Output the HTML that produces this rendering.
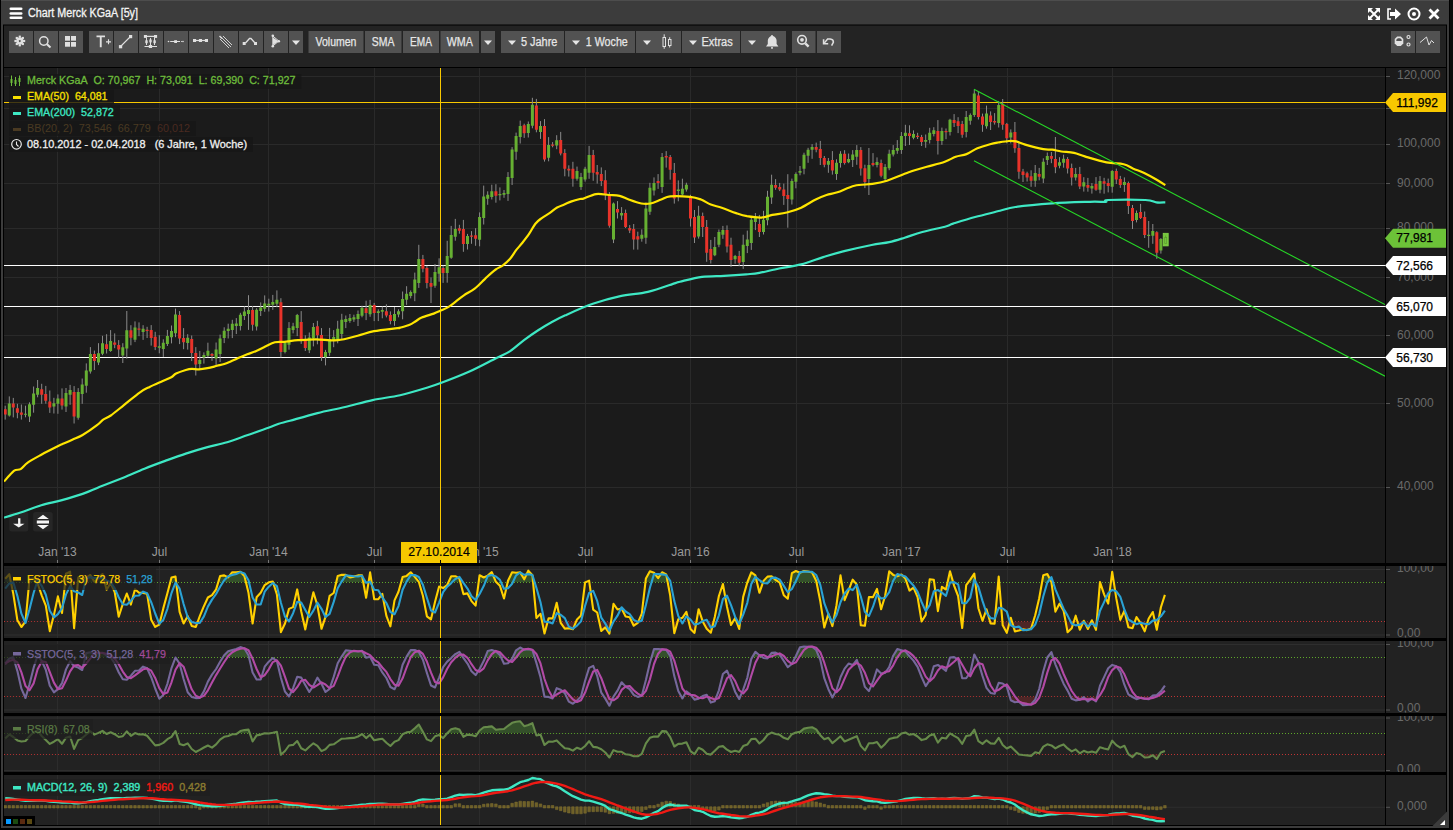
<!DOCTYPE html>
<html><head><meta charset="utf-8"><title>Chart Merck KGaA</title>
<style>
html,body{margin:0;padding:0;background:#0c0c0c;}
body{width:1453px;height:830px;overflow:hidden;position:relative;}
svg{position:absolute;left:0;top:0;display:block;}
text{font-family:"Liberation Sans",sans-serif;}
</style></head><body>
<svg width="1453" height="830" viewBox="0 0 1453 830">
<rect x="0" y="0" width="1453" height="830" fill="#0c0c0c"/>
<rect x="0" y="0" width="1450" height="830" fill="#000"/>
<rect x="1" y="0" width="1448" height="828" fill="#3c3c3c"/>
<rect x="1" y="0" width="1448" height="1" fill="#4d4d4d"/>
<rect x="3" y="24.5" width="1444" height="801.5" fill="#000"/>
<rect x="4" y="25.5" width="1442" height="41.5" fill="#232323"/>
<rect x="4" y="68" width="1442" height="495" fill="#1b1b1b"/>
<line x1="4" y1="76.5" x2="1385" y2="76.5" stroke="#2a2a2a" stroke-width="1"/>
<line x1="4" y1="108.5" x2="1385" y2="108.5" stroke="#2a2a2a" stroke-width="1"/>
<line x1="4" y1="144.5" x2="1385" y2="144.5" stroke="#2a2a2a" stroke-width="1"/>
<line x1="4" y1="183.5" x2="1385" y2="183.5" stroke="#2a2a2a" stroke-width="1"/>
<line x1="4" y1="228.5" x2="1385" y2="228.5" stroke="#2a2a2a" stroke-width="1"/>
<line x1="4" y1="277.5" x2="1385" y2="277.5" stroke="#2a2a2a" stroke-width="1"/>
<line x1="4" y1="335.5" x2="1385" y2="335.5" stroke="#2a2a2a" stroke-width="1"/>
<line x1="4" y1="403.5" x2="1385" y2="403.5" stroke="#2a2a2a" stroke-width="1"/>
<line x1="4" y1="487.5" x2="1385" y2="487.5" stroke="#2a2a2a" stroke-width="1"/>
<line x1="57.5" y1="68" x2="57.5" y2="563" stroke="#2a2a2a" stroke-width="1"/>
<line x1="159.5" y1="68" x2="159.5" y2="563" stroke="#2a2a2a" stroke-width="1"/>
<line x1="268.5" y1="68" x2="268.5" y2="563" stroke="#2a2a2a" stroke-width="1"/>
<line x1="374.5" y1="68" x2="374.5" y2="563" stroke="#2a2a2a" stroke-width="1"/>
<line x1="479.5" y1="68" x2="479.5" y2="563" stroke="#2a2a2a" stroke-width="1"/>
<line x1="585.5" y1="68" x2="585.5" y2="563" stroke="#2a2a2a" stroke-width="1"/>
<line x1="690.5" y1="68" x2="690.5" y2="563" stroke="#2a2a2a" stroke-width="1"/>
<line x1="796.5" y1="68" x2="796.5" y2="563" stroke="#2a2a2a" stroke-width="1"/>
<line x1="901.5" y1="68" x2="901.5" y2="563" stroke="#2a2a2a" stroke-width="1"/>
<line x1="1007.5" y1="68" x2="1007.5" y2="563" stroke="#2a2a2a" stroke-width="1"/>
<line x1="1112.5" y1="68" x2="1112.5" y2="563" stroke="#2a2a2a" stroke-width="1"/>
<rect x="1385" y="68" width="1" height="495" fill="#000"/>
<rect x="1386" y="76.0" width="4" height="1" fill="#555"/>
<text x="1397" y="79.1" font-size="12" fill="#6a6a6a">120,000</text>
<rect x="1386" y="108.0" width="4" height="1" fill="#555"/>
<rect x="1386" y="144.0" width="4" height="1" fill="#555"/>
<text x="1397" y="147.4" font-size="12" fill="#6a6a6a">100,000</text>
<rect x="1386" y="183.0" width="4" height="1" fill="#555"/>
<text x="1397" y="186.8" font-size="12" fill="#6a6a6a">90,000</text>
<rect x="1386" y="228.0" width="4" height="1" fill="#555"/>
<text x="1397" y="230.8" font-size="12" fill="#6a6a6a">80,000</text>
<rect x="1386" y="277.0" width="4" height="1" fill="#555"/>
<text x="1397" y="280.8" font-size="12" fill="#6a6a6a">70,000</text>
<rect x="1386" y="335.0" width="4" height="1" fill="#555"/>
<text x="1397" y="338.5" font-size="12" fill="#6a6a6a">60,000</text>
<rect x="1386" y="403.0" width="4" height="1" fill="#555"/>
<text x="1397" y="406.7" font-size="12" fill="#6a6a6a">50,000</text>
<rect x="1386" y="487.0" width="4" height="1" fill="#555"/>
<text x="1397" y="490.2" font-size="12" fill="#6a6a6a">40,000</text>
<text x="57.5" y="556" font-size="12" fill="#9a9a9a" text-anchor="middle">Jan '13</text>
<rect x="57.0" y="560" width="1" height="3" fill="#777"/>
<text x="159.5" y="556" font-size="12" fill="#9a9a9a" text-anchor="middle">Jul</text>
<rect x="159.0" y="560" width="1" height="3" fill="#777"/>
<text x="268.5" y="556" font-size="12" fill="#9a9a9a" text-anchor="middle">Jan '14</text>
<rect x="268.0" y="560" width="1" height="3" fill="#777"/>
<text x="374.5" y="556" font-size="12" fill="#9a9a9a" text-anchor="middle">Jul</text>
<rect x="374.0" y="560" width="1" height="3" fill="#777"/>
<text x="479.5" y="556" font-size="12" fill="#9a9a9a" text-anchor="middle">Jan '15</text>
<rect x="479.0" y="560" width="1" height="3" fill="#777"/>
<text x="585.5" y="556" font-size="12" fill="#9a9a9a" text-anchor="middle">Jul</text>
<rect x="585.0" y="560" width="1" height="3" fill="#777"/>
<text x="690.5" y="556" font-size="12" fill="#9a9a9a" text-anchor="middle">Jan '16</text>
<rect x="690.0" y="560" width="1" height="3" fill="#777"/>
<text x="796.5" y="556" font-size="12" fill="#9a9a9a" text-anchor="middle">Jul</text>
<rect x="796.0" y="560" width="1" height="3" fill="#777"/>
<text x="901.5" y="556" font-size="12" fill="#9a9a9a" text-anchor="middle">Jan '17</text>
<rect x="901.0" y="560" width="1" height="3" fill="#777"/>
<text x="1007.5" y="556" font-size="12" fill="#9a9a9a" text-anchor="middle">Jul</text>
<rect x="1007.0" y="560" width="1" height="3" fill="#777"/>
<text x="1112.5" y="556" font-size="12" fill="#9a9a9a" text-anchor="middle">Jan '18</text>
<rect x="1112.0" y="560" width="1" height="3" fill="#777"/>
<defs><clipPath id="plot"><rect x="4" y="68" width="1381" height="495"/></clipPath></defs>
<g clip-path="url(#plot)">
<line x1="4" y1="265.5" x2="1385" y2="265.5" stroke="#ffffff" stroke-width="1"/>
<line x1="4" y1="306.5" x2="1385" y2="306.5" stroke="#ffffff" stroke-width="1"/>
<line x1="4" y1="357.5" x2="1385" y2="357.5" stroke="#ffffff" stroke-width="1"/>
<line x1="4" y1="102.5" x2="1385" y2="102.5" stroke="#f8c800" stroke-width="1"/>
<line x1="440.5" y1="68" x2="440.5" y2="563" stroke="#f8c800" stroke-width="1"/>
<path d="M5.2 405.7V419.6M9.3 396.4V416.6M13.3 397.9V417.4M17.4 403.8V418.3M21.4 404.5V419.6M25.5 405.7V417.3M29.5 402.3V422.0M33.6 386.5V412.7M37.6 380.0V397.3M41.7 383.8V403.8M45.8 385.9V403.7M49.8 390.5V412.9M53.9 397.8V413.5M57.9 394.4V413.8M62.0 388.4V409.6M66.0 388.0V412.0M70.1 384.9V404.8M74.1 386.1V423.5M78.2 388.1V419.7M82.2 378.5V403.8M86.3 363.4V392.7M90.4 347.1V373.6M94.4 350.6V370.0M98.5 343.2V365.1M102.5 335.8V355.2M106.6 334.2V353.5M110.6 330.1V351.8M114.7 333.4V348.2M118.7 340.1V357.6M122.8 343.2V363.0M126.8 311.0V358.7M130.9 325.2V345.3M135.0 321.4V342.1M139.0 322.4V336.2M143.1 325.2V339.9M147.1 326.8V338.0M151.2 325.1V345.6M155.2 331.8V350.1M159.3 335.2V353.3M163.3 339.3V356.9M167.4 329.9V346.0M171.5 325.5V343.4M175.5 308.6V337.2M179.6 311.1V344.1M183.6 328.1V349.2M187.7 334.2V349.6M191.7 335.5V361.1M195.8 347.1V375.5M199.8 350.9V369.4M203.9 352.4V363.6M207.9 342.7V357.3M212.0 353.0V360.8M216.1 342.5V366.8M220.1 334.6V362.0M224.2 327.3V343.1M228.2 323.7V338.5M232.3 319.8V338.1M236.3 318.1V334.0M240.4 312.8V330.5M244.4 306.5V320.0M248.5 295.2V329.9M252.6 305.9V330.7M256.6 308.2V330.5M260.7 302.4V316.0M264.7 295.4V311.8M268.8 298.7V311.5M272.8 294.9V309.8M276.9 290.4V307.2M280.9 298.2V357.4M285.0 340.9V353.4M289.0 322.1V349.7M293.1 322.8V333.4M297.2 313.9V336.1M301.2 311.1V343.9M305.3 335.3V351.0M309.3 332.5V353.1M313.4 323.0V346.4M317.4 320.8V344.3M321.5 328.1V360.9M325.5 349.9V365.4M329.6 327.9V355.8M333.7 330.1V347.2M337.7 320.8V343.3M341.8 313.8V338.9M345.8 315.5V328.1M349.9 314.0V322.8M353.9 314.7V321.9M358.0 310.5V326.0M362.0 305.7V317.3M366.1 300.7V320.1M370.1 299.9V316.8M374.2 302.9V321.1M378.3 309.3V321.1M382.3 306.5V318.3M386.4 304.3V317.4M390.4 311.4V324.3M394.5 307.0V325.8M398.5 309.3V317.3M402.6 291.5V319.3M406.6 286.2V304.9M410.7 290.4V298.4M414.8 272.6V301.2M418.8 244.8V287.9M422.9 254.9V272.3M426.9 265.9V288.4M431.0 277.4V303.0M435.0 264.0V287.8M439.1 258.3V281.7M443.1 265.6V282.9M447.2 240.8V282.7M451.2 225.9V258.8M455.3 218.9V240.7M459.4 224.8V233.7M463.4 219.9V251.8M467.5 233.9V249.5M471.5 231.1V243.8M475.6 228.2V245.8M479.6 212.4V246.3M483.7 185.6V224.5M487.7 191.3V204.8M491.8 184.7V199.5M495.9 184.2V202.7M499.9 187.4V200.4M504.0 190.0V197.8M508.0 172.1V200.9M512.1 147.1V185.0M516.1 132.6V159.8M520.2 120.6V143.5M524.2 123.7V137.9M528.3 121.5V137.5M532.4 97.8V128.3M536.4 98.9V132.3M540.5 121.1V138.9M544.5 119.1V161.6M548.6 137.1V161.3M552.6 142.1V147.3M556.7 135.2V149.2M560.7 131.9V155.4M564.8 149.1V176.3M568.8 165.3V176.6M572.9 161.8V186.7M577.0 166.6V180.7M581.0 172.9V189.9M585.1 166.8V181.6M589.1 145.9V178.8M593.2 149.9V180.8M597.2 165.0V183.6M601.3 167.4V186.1M605.3 170.2V200.1M609.4 192.1V227.7M613.5 202.5V243.1M617.5 201.1V218.5M621.6 207.1V219.9M625.6 209.6V228.0M629.7 225.1V233.1M633.7 224.0V249.6M637.8 231.7V249.6M641.8 229.3V241.7M645.9 202.6V243.8M649.9 182.8V214.8M654.0 177.4V195.5M658.1 174.1V188.9M662.1 153.0V192.9M666.2 151.1V167.6M670.2 155.0V179.7M674.3 163.0V203.6M678.3 180.4V201.3M682.4 178.7V195.5M686.4 182.7V191.6M690.5 194.8V226.5M694.5 210.0V243.0M698.6 205.8V238.6M702.7 212.6V237.0M706.7 220.0V261.8M710.8 239.9V263.5M714.8 237.0V256.2M718.9 229.5V247.2M722.9 225.9V238.8M727.0 225.4V252.5M731.0 237.7V267.0M735.1 254.9V263.7M739.2 250.9V266.3M743.2 234.7V268.9M747.3 230.6V253.1M751.3 216.3V249.9M755.4 213.0V230.1M759.4 214.9V237.0M763.5 210.8V234.5M767.5 190.8V225.3M771.6 174.7V203.9M775.6 179.1V189.8M779.7 182.9V191.1M783.8 183.6V204.9M787.8 174.2V227.7M791.9 178.6V204.5M795.9 172.4V188.3M800.0 166.0V175.3M804.0 152.7V174.3M808.1 147.8V162.8M812.1 144.1V158.8M816.2 142.6V152.3M820.3 140.9V165.0M824.3 156.0V167.3M828.4 158.0V172.8M832.4 151.1V174.6M836.5 159.3V179.9M840.5 151.2V167.6M844.6 150.2V164.6M848.6 153.5V163.2M852.7 150.1V167.0M856.8 145.1V164.8M860.8 147.1V175.6M864.9 164.7V188.1M868.9 148.0V195.0M873.0 153.1V166.4M877.0 157.4V167.4M881.1 159.6V177.3M885.1 164.1V182.0M889.2 149.7V170.2M893.2 145.1V156.5M897.3 140.1V153.8M901.4 132.0V153.9M905.4 124.8V146.0M909.5 125.3V145.0M913.5 130.4V139.3M917.6 132.8V139.0M921.6 134.9V146.0M925.7 134.5V147.8M929.7 127.8V143.5M933.8 127.2V136.4M937.9 120.1V154.5M941.9 127.6V144.9M946.0 128.5V139.2M950.0 118.8V135.5M954.1 114.1V127.0M958.1 117.2V133.1M962.2 120.9V137.8M966.2 111.0V137.4M970.3 113.4V124.7M974.3 89.6V116.9M978.4 91.4V119.5M982.5 113.6V131.8M986.5 105.6V128.7M990.6 111.4V130.0M994.6 113.1V124.6M998.7 100.9V127.5M1002.7 99.0V129.8M1006.8 122.9V143.3M1010.8 129.4V143.4M1014.9 122.0V152.8M1018.9 141.9V178.8M1023.0 168.9V182.0M1027.1 171.7V181.5M1031.1 170.3V186.8M1035.2 165.0V186.8M1039.2 167.9V180.3M1043.3 158.3V183.1M1047.3 152.5V165.0M1051.4 152.0V163.2M1055.4 137.0V173.2M1059.5 157.2V168.3M1063.6 154.7V167.7M1067.6 157.1V173.5M1071.7 163.6V185.5M1075.7 167.9V180.5M1079.8 166.9V189.1M1083.8 177.2V191.6M1087.9 177.9V191.7M1091.9 183.1V193.6M1096.0 177.1V190.8M1100.0 176.1V193.3M1104.1 177.8V193.7M1108.2 178.6V192.4M1112.2 170.1V192.7M1116.3 168.6V184.0M1120.3 175.9V187.9M1124.4 177.4V191.9M1128.4 181.6V214.0M1132.5 205.0V229.0M1136.5 210.5V222.4M1140.6 203.9V219.0M1144.7 211.5V238.0M1148.7 221.0V247.8M1152.8 224.0V243.8M1156.8 231.2V258.8M1160.9 238.0V253.6" stroke="#8a8a8a" stroke-width="1" fill="none"/>
<path d="M7.8 403.4h3v12.1h-3zM24.0 413.7h3v1.1h-3zM28.0 404.3h3v12.1h-3zM32.1 393.5h3v11.2h-3zM36.1 388.1h3v6.7h-3zM52.4 403.3h3v3.3h-3zM56.4 398.4h3v5.4h-3zM64.5 393.0h3v13.6h-3zM68.6 389.9h3v4.9h-3zM76.7 392.1h3v25.7h-3zM80.7 384.5h3v9.4h-3zM84.8 370.4h3v15.4h-3zM88.9 354.1h3v17.5h-3zM97.0 353.2h3v9.4h-3zM101.0 343.3h3v10.5h-3zM109.1 341.1h3v9.8h-3zM121.3 347.2h3v8.3h-3zM125.3 330.2h3v18.4h-3zM133.5 327.4h3v12.3h-3zM141.6 328.7h3v3.3h-3zM157.8 346.2h3v1.6h-3zM161.8 342.8h3v6.1h-3zM165.9 335.9h3v8.1h-3zM170.0 331.0h3v6.3h-3zM174.0 314.6h3v18.6h-3zM186.2 337.7h3v5.4h-3zM198.3 359.9h3v4.0h-3zM202.4 354.9h3v2.7h-3zM206.4 350.7h3v5.1h-3zM214.6 349.5h3v9.0h-3zM218.6 338.6h3v15.4h-3zM222.7 330.8h3v7.2h-3zM226.7 328.7h3v2.3h-3zM230.8 323.8h3v6.3h-3zM234.8 323.6h3v2.3h-3zM238.9 314.8h3v11.2h-3zM242.9 311.5h3v4.5h-3zM247.0 309.9h3v4.0h-3zM255.1 309.7h3v16.8h-3zM259.2 307.4h3v3.6h-3zM263.2 303.4h3v5.4h-3zM267.3 303.7h3v1.8h-3zM271.3 301.9h3v2.9h-3zM275.4 299.8h3v4.0h-3zM283.5 342.9h3v9.0h-3zM287.5 328.1h3v16.6h-3zM291.6 326.3h3v3.6h-3zM295.7 314.9h3v13.2h-3zM307.8 337.5h3v12.7h-3zM311.9 327.0h3v11.4h-3zM324.0 351.9h3v5.4h-3zM328.1 338.9h3v13.9h-3zM332.2 337.1h3v3.1h-3zM336.2 328.8h3v10.5h-3zM340.3 319.8h3v14.1h-3zM344.3 319.0h3v3.1h-3zM348.4 318.0h3v2.9h-3zM352.4 317.2h3v2.2h-3zM356.5 314.0h3v5.1h-3zM360.5 307.7h3v8.1h-3zM368.6 304.9h3v9.4h-3zM376.8 311.3h3v1.8h-3zM380.8 310.0h3v1.8h-3zM393.0 314.0h3v6.9h-3zM397.0 311.3h3v3.1h-3zM401.1 299.0h3v12.3h-3zM405.1 293.7h3v6.1h-3zM409.2 291.9h3v4.0h-3zM413.3 279.6h3v13.6h-3zM417.3 258.9h3v24.0h-3zM433.5 272.0h3v13.7h-3zM437.6 267.2h3v6.5h-3zM445.7 256.0h3v16.9h-3zM449.7 234.9h3v22.9h-3zM453.8 228.9h3v7.8h-3zM466.0 235.9h3v8.1h-3zM478.1 216.9h3v22.9h-3zM482.2 196.6h3v21.3h-3zM486.2 194.8h3v4.0h-3zM490.3 191.2h3v5.8h-3zM498.4 193.9h3v1.4h-3zM502.5 193.0h3v1.8h-3zM506.5 177.1h3v16.8h-3zM510.6 149.6h3v28.4h-3zM514.6 136.1h3v15.7h-3zM518.7 126.1h3v10.8h-3zM526.8 124.0h3v9.0h-3zM530.9 104.8h3v21.0h-3zM539.0 126.1h3v5.8h-3zM547.1 145.1h3v12.7h-3zM555.2 140.2h3v5.4h-3zM575.5 171.1h3v7.6h-3zM579.5 176.9h3v10.0h-3zM583.6 168.8h3v10.8h-3zM587.6 154.9h3v17.9h-3zM612.0 203.5h3v36.1h-3zM620.1 213.1h3v2.3h-3zM640.3 234.8h3v3.9h-3zM644.4 208.6h3v29.2h-3zM648.4 187.8h3v24.0h-3zM652.5 182.9h3v7.6h-3zM660.6 157.0h3v29.9h-3zM676.8 189.5h3v1.5h-3zM680.9 188.7h3v5.8h-3zM684.9 184.7h3v4.9h-3zM697.1 215.8h3v20.8h-3zM713.3 247.0h3v8.2h-3zM717.4 232.0h3v12.7h-3zM721.4 229.9h3v4.9h-3zM733.6 255.9h3v3.3h-3zM741.7 244.7h3v17.2h-3zM745.8 239.6h3v6.5h-3zM749.8 219.8h3v23.1h-3zM753.9 218.0h3v4.1h-3zM762.0 219.8h3v12.2h-3zM766.0 196.8h3v23.5h-3zM770.1 184.7h3v12.7h-3zM790.4 181.1h3v18.4h-3zM794.4 173.9h3v7.9h-3zM798.5 171.0h3v1.8h-3zM802.5 154.7h3v14.1h-3zM806.6 149.8h3v6.0h-3zM810.6 147.1h3v2.7h-3zM826.9 161.0h3v3.8h-3zM835.0 162.8h3v11.1h-3zM839.0 153.7h3v9.4h-3zM847.1 159.0h3v3.2h-3zM851.2 154.6h3v5.4h-3zM855.2 150.1h3v6.7h-3zM867.4 164.9h3v14.1h-3zM875.5 161.9h3v3.0h-3zM883.6 167.1h3v11.9h-3zM887.7 153.7h3v14.5h-3zM891.7 150.1h3v4.4h-3zM895.8 148.1h3v2.7h-3zM899.9 136.0h3v13.9h-3zM903.9 132.8h3v3.2h-3zM912.0 133.9h3v3.9h-3zM924.2 140.0h3v1.8h-3zM928.2 132.8h3v7.2h-3zM932.3 130.2h3v3.7h-3zM940.4 131.1h3v9.8h-3zM948.5 119.8h3v12.2h-3zM964.7 117.0h3v14.9h-3zM968.8 114.9h3v5.8h-3zM972.8 93.6h3v21.3h-3zM985.0 113.6h3v12.6h-3zM997.2 104.9h3v18.1h-3zM1009.3 132.4h3v5.0h-3zM1033.7 173.0h3v7.8h-3zM1041.8 161.8h3v16.8h-3zM1045.8 156.0h3v4.0h-3zM1058.0 162.2h3v3.6h-3zM1062.1 158.7h3v4.0h-3zM1074.2 173.9h3v3.6h-3zM1082.3 182.2h3v4.4h-3zM1090.4 186.1h3v2.5h-3zM1098.5 181.1h3v8.7h-3zM1110.7 171.1h3v15.6h-3zM1122.9 181.9h3v3.0h-3zM1135.0 213.0h3v6.9h-3zM1147.2 234.7h3v1.2h-3zM1151.3 231.0h3v4.8h-3zM1159.4 239.0h3v11.6h-3z" fill="#66b032"/>
<path d="M3.7 409.2h3v5.4h-3zM11.8 403.4h3v4.0h-3zM15.9 408.3h3v4.5h-3zM19.9 412.5h3v2.2h-3zM40.2 389.3h3v5.4h-3zM44.2 393.9h3v6.9h-3zM48.3 401.5h3v6.0h-3zM60.5 398.4h3v7.2h-3zM72.6 392.1h3v24.4h-3zM92.9 354.1h3v6.9h-3zM105.1 344.2h3v4.9h-3zM113.2 342.4h3v2.3h-3zM117.2 345.1h3v4.5h-3zM129.4 330.2h3v7.6h-3zM137.5 328.4h3v1.3h-3zM145.6 329.8h3v1.2h-3zM149.7 330.1h3v8.0h-3zM153.7 336.8h3v10.3h-3zM178.1 315.1h3v23.5h-3zM182.1 338.1h3v4.2h-3zM190.2 339.0h3v14.1h-3zM194.3 353.1h3v11.4h-3zM210.5 354.0h3v1.8h-3zM251.1 309.9h3v14.8h-3zM279.4 302.2h3v49.7h-3zM299.7 322.1h3v16.8h-3zM303.8 339.3h3v8.7h-3zM315.9 326.3h3v9.0h-3zM320.0 335.1h3v22.2h-3zM364.6 308.2h3v4.9h-3zM372.7 304.9h3v8.1h-3zM384.9 311.3h3v4.2h-3zM388.9 314.9h3v6.0h-3zM421.4 258.9h3v9.9h-3zM425.4 267.9h3v15.0h-3zM429.5 282.9h3v3.9h-3zM441.6 268.1h3v4.8h-3zM457.9 228.3h3v2.4h-3zM461.9 228.9h3v15.1h-3zM470.0 235.6h3v1.2h-3zM474.1 235.2h3v3.6h-3zM494.4 191.2h3v4.5h-3zM522.7 125.2h3v8.1h-3zM534.9 105.4h3v24.4h-3zM543.0 126.1h3v33.4h-3zM551.1 144.6h3v1.2h-3zM559.2 139.9h3v13.5h-3zM563.3 153.1h3v15.7h-3zM567.3 168.8h3v1.8h-3zM571.4 168.8h3v9.9h-3zM591.7 154.9h3v17.9h-3zM595.7 172.0h3v2.6h-3zM599.8 173.9h3v7.2h-3zM603.8 180.2h3v13.9h-3zM607.9 194.1h3v31.6h-3zM616.0 209.1h3v3.4h-3zM624.1 213.1h3v13.9h-3zM628.2 228.1h3v2.5h-3zM632.2 229.0h3v10.6h-3zM636.3 236.2h3v3.4h-3zM656.6 181.1h3v1.8h-3zM664.7 156.1h3v1.5h-3zM668.7 157.0h3v12.7h-3zM672.8 173.0h3v25.6h-3zM689.0 196.8h3v21.7h-3zM693.0 217.0h3v20.5h-3zM701.2 216.1h3v10.9h-3zM705.2 227.0h3v25.8h-3zM709.3 248.9h3v11.1h-3zM725.5 229.9h3v16.6h-3zM729.5 244.7h3v15.3h-3zM737.7 255.9h3v6.9h-3zM757.9 223.9h3v8.1h-3zM774.1 185.1h3v2.7h-3zM778.2 186.9h3v2.7h-3zM782.3 189.6h3v6.3h-3zM786.3 195.0h3v4.0h-3zM814.7 147.1h3v2.7h-3zM818.8 148.9h3v9.1h-3zM822.8 158.0h3v6.8h-3zM830.9 160.1h3v10.5h-3zM843.1 153.7h3v9.4h-3zM859.3 150.1h3v18.5h-3zM863.4 168.2h3v13.9h-3zM871.5 163.1h3v1.8h-3zM879.6 163.1h3v12.7h-3zM908.0 133.3h3v2.7h-3zM916.1 135.8h3v1.2h-3zM920.1 136.9h3v5.1h-3zM936.4 131.1h3v9.8h-3zM944.5 131.0h3v1.2h-3zM952.6 120.1h3v2.9h-3zM956.6 121.2h3v4.9h-3zM960.7 123.9h3v10.9h-3zM976.9 95.4h3v21.6h-3zM981.0 116.6h3v8.2h-3zM989.1 115.4h3v6.6h-3zM993.1 121.1h3v1.5h-3zM1001.2 104.0h3v20.8h-3zM1005.3 123.9h3v14.4h-3zM1013.4 132.0h3v16.3h-3zM1017.4 147.9h3v23.9h-3zM1021.5 171.4h3v3.6h-3zM1025.6 173.2h3v4.3h-3zM1029.6 176.3h3v4.5h-3zM1037.7 173.9h3v2.9h-3zM1049.9 156.0h3v2.7h-3zM1053.9 159.1h3v8.1h-3zM1066.1 159.1h3v9.4h-3zM1070.2 168.1h3v9.4h-3zM1078.3 173.9h3v12.7h-3zM1086.4 184.9h3v2.8h-3zM1094.5 184.1h3v5.7h-3zM1102.6 181.3h3v2.4h-3zM1106.7 183.1h3v2.8h-3zM1114.8 171.1h3v8.4h-3zM1118.8 178.9h3v6.0h-3zM1126.9 183.1h3v22.9h-3zM1131.0 208.0h3v13.0h-3zM1139.1 211.9h3v6.1h-3zM1143.2 217.0h3v18.0h-3zM1155.3 232.2h3v20.6h-3z" fill="#e8332a"/>
<rect x="9.3" y="512" width="19" height="19.6" rx="2.5" fill="#262626"/>
<rect x="33.1" y="512" width="19.6" height="19.6" rx="2.5" fill="#262626"/>
<path d="M18.1 518.3h2.3v5.5h4.1l-5.7 3.6l-5.7-3.6h5z" fill="#f4f4f4"/>
<path d="M43 514.7l5.8 4.2h-11.6z M36.8 520.4h12.2v3h-12.2z M43 529.2l5.8-4.3h-11.6z" fill="#f4f4f4"/>
<path d="M4.1,481.5 C5.7,479.7 11.2,473.0 13.9,470.9 C16.6,468.8 18.3,470.5 20.6,469.1 C22.9,467.7 24.2,465.0 27.7,462.6 C31.1,460.2 36.2,457.5 41.3,454.7 C46.4,451.9 54.8,447.7 58.2,446.0 C61.7,444.3 59.6,445.3 62.0,444.3 C64.3,443.3 68.9,441.4 72.3,439.8 C75.7,438.2 78.5,437.4 82.6,435.0 C86.7,432.6 93.6,427.8 97.0,425.2 C100.4,422.6 100.9,421.2 103.2,419.6 C105.5,418.0 107.3,417.9 110.8,415.5 C114.2,413.1 119.0,409.0 123.9,405.1 C128.8,401.2 135.7,395.3 140.0,392.3 C144.3,389.3 146.0,388.7 149.6,386.9 C153.2,385.1 158.1,383.0 161.7,381.4 C165.3,379.8 168.9,378.5 171.3,377.2 C173.7,375.9 173.7,374.8 176.1,373.6 C178.5,372.4 183.2,370.8 185.8,370.0 C188.4,369.2 189.6,368.9 191.8,368.8 C194.0,368.7 196.4,369.5 199.0,369.4 C201.6,369.3 204.5,368.8 207.5,368.2 C210.5,367.6 214.3,366.5 217.1,365.8 C219.9,365.1 221.9,364.8 224.3,364.0 C226.7,363.2 229.0,362.1 231.6,361.0 C234.2,359.9 237.4,358.4 240.0,357.3 C242.6,356.2 244.6,355.3 247.2,354.3 C249.8,353.3 252.7,352.6 255.7,351.3 C258.7,350.0 262.1,348.0 265.3,346.5 C268.5,345.0 271.7,343.1 274.9,342.3 C278.1,341.5 282.1,342.1 284.6,341.9 C287.1,341.7 287.8,341.4 290.0,341.1 C292.2,340.8 293.6,340.5 298.0,340.2 C302.4,339.9 309.5,339.3 316.1,339.3 C322.7,339.3 330.9,340.8 337.8,340.2 C344.7,339.6 351.7,337.2 357.7,335.7 C363.7,334.2 367.4,332.5 374.0,331.2 C380.6,329.9 393.2,328.7 397.5,328.1 C401.8,327.5 398.0,328.4 400.0,327.8 C402.0,327.2 407.0,325.9 409.6,324.8 C412.2,323.7 413.7,322.4 415.7,321.2 C417.7,320.0 418.7,318.9 421.7,317.6 C424.7,316.3 430.7,314.7 433.7,313.6 C436.7,312.5 437.4,312.1 439.8,311.0 C442.2,309.9 445.6,308.6 448.2,307.1 C450.8,305.6 452.8,303.9 455.4,301.9 C458.0,299.9 460.7,297.5 463.9,295.3 C467.1,293.1 471.3,291.3 474.7,288.7 C478.1,286.1 482.2,281.6 484.3,279.6 C486.4,277.6 485.3,278.4 487.2,276.7 C489.1,275.0 493.1,271.4 495.7,269.5 C498.3,267.6 500.5,267.1 502.9,265.3 C505.3,263.5 507.9,261.2 510.1,258.7 C512.3,256.2 514.1,252.8 516.1,250.2 C518.1,247.6 520.0,245.8 522.2,243.0 C524.4,240.2 527.2,236.6 529.4,233.4 C531.6,230.2 533.4,226.2 535.4,223.7 C537.4,221.2 539.0,220.1 541.4,218.3 C543.8,216.5 547.3,214.7 549.9,212.9 C552.5,211.1 554.7,208.9 557.1,207.5 C559.5,206.1 561.9,205.5 564.3,204.5 C566.7,203.5 569.0,202.3 571.6,201.4 C574.2,200.5 578.0,199.5 580.0,199.0 C582.0,198.5 580.8,199.4 583.5,198.6 C586.2,197.8 591.9,194.7 596.1,194.1 C600.3,193.5 604.9,194.7 608.8,195.0 C612.7,195.3 616.3,195.2 619.6,195.9 C622.9,196.7 625.1,198.2 628.7,199.5 C632.3,200.8 637.7,202.8 641.3,203.5 C644.9,204.2 647.1,204.2 650.4,203.5 C653.7,202.8 657.9,200.7 661.2,199.5 C664.5,198.3 665.4,196.8 670.2,196.3 C675.0,195.9 685.0,196.3 690.1,196.8 C695.2,197.3 697.5,198.2 701.0,199.5 C704.5,200.8 707.3,203.2 710.8,204.6 C714.2,206.0 717.5,206.3 721.7,207.7 C725.9,209.1 731.9,211.7 736.1,213.1 C740.3,214.5 742.8,215.4 747.0,216.2 C751.2,216.9 757.2,217.8 761.4,217.6 C765.6,217.4 768.1,215.8 772.3,214.9 C776.5,214.1 782.0,213.7 786.8,212.5 C791.6,211.3 796.4,209.9 801.2,207.7 C806.0,205.5 811.5,201.6 815.7,199.5 C819.9,197.4 822.9,196.2 826.5,195.0 C830.1,193.8 832.7,193.9 837.4,192.3 C842.1,190.8 848.6,187.1 854.5,185.7 C860.4,184.3 867.1,184.7 872.5,183.9 C877.9,183.1 881.0,182.6 887.0,180.7 C893.0,178.8 902.1,174.5 908.7,172.2 C915.3,169.9 920.8,168.6 926.8,166.8 C932.8,165.1 940.0,163.4 944.8,161.7 C949.6,160.0 952.1,158.1 955.7,156.8 C959.3,155.5 962.9,155.5 966.5,154.1 C970.1,152.7 973.5,150.0 977.4,148.3 C981.3,146.7 986.5,145.2 990.0,144.2 C993.5,143.2 995.0,143.0 998.1,142.5 C1001.2,142.0 1005.9,141.2 1008.9,141.0 C1011.9,140.8 1013.4,140.8 1016.1,141.4 C1018.8,142.0 1020.7,143.3 1025.2,144.6 C1029.7,145.9 1038.8,148.3 1043.3,149.2 C1047.8,150.0 1049.3,149.3 1052.3,149.7 C1055.3,150.1 1057.7,151.0 1061.3,151.5 C1064.9,152.0 1070.1,152.0 1074.0,152.8 C1077.9,153.6 1079.4,154.8 1084.8,156.4 C1090.2,158.0 1100.0,161.1 1106.5,162.4 C1113.0,163.7 1119.2,163.1 1123.7,164.2 C1128.2,165.2 1130.0,167.2 1133.4,168.7 C1136.8,170.1 1140.4,171.1 1144.2,172.9 C1148.0,174.7 1152.8,177.4 1156.3,179.5 C1159.8,181.6 1163.8,184.2 1165.3,185.2" fill="none" stroke="#ffe600" stroke-width="2.2" stroke-linejoin="round"/>
<path d="M4.1,517.6 C6.8,516.8 14.4,514.6 20.6,512.5 C26.8,510.4 34.4,507.3 41.3,505.2 C48.2,503.1 55.1,502.0 62.0,500.1 C68.9,498.2 75.7,496.3 82.6,493.9 C89.5,491.5 96.3,488.4 103.2,485.6 C110.1,482.9 117.0,480.2 123.9,477.4 C130.8,474.6 137.6,471.4 144.5,468.7 C151.4,465.9 158.3,463.4 165.2,460.9 C172.1,458.4 178.9,455.9 185.8,453.6 C192.7,451.4 199.6,449.3 206.5,447.4 C213.4,445.5 220.2,444.4 227.1,442.3 C234.0,440.2 240.9,437.4 247.8,435.0 C254.7,432.6 263.2,429.7 268.4,427.8 C273.6,425.9 275.2,424.9 278.8,423.7 C282.4,422.5 283.6,422.6 290.0,420.8 C296.4,419.0 308.3,415.4 317.5,413.1 C326.7,410.8 335.9,409.2 345.1,407.0 C354.3,404.8 363.4,402.1 372.6,400.1 C381.8,398.1 390.9,397.3 400.1,395.2 C409.3,393.1 420.7,389.6 427.6,387.5 C434.5,385.4 434.5,385.4 441.4,382.8 C448.3,380.2 459.7,375.9 468.9,371.8 C478.1,367.7 489.6,361.4 496.5,358.0 C503.4,354.6 505.6,354.1 510.2,351.1 C514.8,348.1 519.4,343.5 524.0,340.1 C528.6,336.7 533.2,333.5 537.8,330.5 C542.4,327.5 546.9,324.7 551.5,322.2 C556.1,319.7 558.4,318.4 565.3,315.3 C572.2,312.2 583.6,307.0 592.8,303.8 C602.0,300.6 611.1,298.1 620.3,296.1 C629.5,294.1 638.7,294.1 647.9,291.9 C657.1,289.7 670.0,284.8 675.4,283.1 C680.8,281.4 675.6,282.7 680.0,281.7 C684.4,280.7 694.7,277.9 702.0,276.9 C709.3,275.9 716.6,276.2 724.0,275.8 C731.4,275.4 740.2,274.8 746.1,274.3 C752.0,273.8 753.8,273.9 759.3,272.9 C764.8,271.9 772.1,269.9 779.1,268.5 C786.1,267.1 793.8,266.3 801.1,264.4 C808.5,262.5 815.9,259.4 823.2,257.1 C830.6,254.9 837.1,252.9 845.2,250.9 C853.3,248.9 864.3,246.5 871.6,245.0 C878.9,243.5 883.7,243.3 889.2,242.1 C894.7,240.9 899.1,239.4 904.6,237.7 C910.1,236.0 915.3,233.9 922.3,232.0 C929.3,230.1 941.4,227.6 946.5,226.2 C951.6,224.8 948.3,225.1 953.1,223.6 C957.9,222.1 967.3,219.1 975.1,217.0 C982.9,214.9 993.3,212.5 1000.0,210.8 C1006.7,209.1 1006.7,208.2 1015.4,207.0 C1024.1,205.8 1039.9,204.3 1052.3,203.4 C1064.7,202.5 1081.1,202.1 1090.0,201.8 C1098.9,201.5 1102.7,202.1 1105.7,201.8 C1108.7,201.5 1101.4,200.3 1108.0,200.0 C1114.6,199.7 1137.4,199.6 1145.4,200.0 C1153.5,200.4 1153.0,202.0 1156.3,202.4 C1159.6,202.8 1163.8,202.4 1165.3,202.4" fill="none" stroke="#3ee8c4" stroke-width="2.2" stroke-linejoin="round"/>
<line x1="974" y1="89.2" x2="1385" y2="304.6" stroke="#26d626" stroke-width="1.1"/>
<line x1="974" y1="160.8" x2="1385" y2="376.2" stroke="#26d626" stroke-width="1.1"/>
<rect x="1163.2" y="233.3" width="5" height="12.6" fill="#76c83c" stroke="#86d84a" stroke-width="0.8"/><rect x="1164.7" y="237.5" width="2" height="6" fill="none" stroke="#5a9a30" stroke-width="0.7"/><rect x="1165.3" y="235.5" width="0.8" height="2" fill="#5a9a30"/>
</g>
<path d="M1385 102.5 L1393 93.0 H1446 V112.0 H1393 Z" fill="#f8c800"/>
<text x="1396.3" y="106.6" font-size="12" fill="#000" stroke="#000" stroke-width="0.25">111,992</text>
<path d="M1385 238.3 L1393 228.8 H1446 V247.8 H1393 Z" fill="#6cc238"/>
<text x="1396.3" y="242.4" font-size="12" fill="#000" stroke="#000" stroke-width="0.25">77,981</text>
<path d="M1385 265.5 L1393 256.0 H1446 V275.0 H1393 Z" fill="#ffffff"/>
<text x="1396.3" y="269.6" font-size="12" fill="#000" stroke="#000" stroke-width="0.25">72,566</text>
<path d="M1385 306.5 L1393 297.0 H1446 V316.0 H1393 Z" fill="#ffffff"/>
<text x="1396.3" y="310.6" font-size="12" fill="#000" stroke="#000" stroke-width="0.25">65,070</text>
<path d="M1385 357.5 L1393 348.0 H1446 V367.0 H1393 Z" fill="#ffffff"/>
<text x="1396.3" y="361.6" font-size="12" fill="#000" stroke="#000" stroke-width="0.25">56,730</text>
<rect x="401" y="542" width="76" height="21" fill="#f5c800"/>
<text x="439" y="556.3" font-size="12" fill="#000" text-anchor="middle" textLength="61.5" lengthAdjust="spacingAndGlyphs" stroke="#000" stroke-width="0.2">27.10.2014</text><rect x="440" y="560" width="1" height="3" fill="#000"/>
<rect x="9" y="74" width="292.5" height="15" fill="#161616" fill-opacity="0.8"/>
<rect x="9" y="89.5" width="105" height="15" fill="#161616" fill-opacity="0.8"/>
<rect x="9" y="105" width="111" height="15.5" fill="#161616" fill-opacity="0.8"/>
<rect x="9" y="121" width="187" height="15" fill="#161616" fill-opacity="0.8"/>
<rect x="9" y="137" width="244" height="15" fill="#161616" fill-opacity="0.8"/>
<text x="27.0" y="84.0" font-size="11.0" fill="#6ebc3c" textLength="268.5" lengthAdjust="spacingAndGlyphs" stroke="#6ebc3c" stroke-width="0.30">Merck KGaA&#160; O: 70,967&#160; H: 73,091&#160; L: 69,390&#160; C: 71,927</text>
<path d="M11.5 75.5v10.5M15.5 77v9M19.5 75.5v10.5" stroke="#6ebc3c" stroke-width="1"/><rect x="10.5" y="79" width="2" height="4" fill="#6ebc3c"/><rect x="14.5" y="80" width="2" height="4" fill="#6ebc3c"/><rect x="18.5" y="78" width="2" height="4" fill="#6ebc3c"/>
<rect x="13" y="96" width="8" height="3" fill="#f8e000"/>
<text x="27.0" y="100.0" font-size="11.0" fill="#f8e000" textLength="80.5" lengthAdjust="spacingAndGlyphs" stroke="#f8e000" stroke-width="0.30">EMA(50)&#160; 64,081</text>
<rect x="13" y="112" width="8" height="3" fill="#3ee8c4"/>
<text x="27.0" y="116.0" font-size="11.0" fill="#3ee8c4" textLength="86.8" lengthAdjust="spacingAndGlyphs" stroke="#3ee8c4" stroke-width="0.30">EMA(200)&#160; 52,872</text>
<rect x="13" y="128" width="8" height="3" fill="#4a3a22"/>
<text x="27" y="132" font-size="11" fill="#4a3a22" textLength="163" lengthAdjust="spacingAndGlyphs">BB(20, 2)&#160; 73,546&#160; 66,779&#160; <tspan fill="#4a2a20">60,012</tspan></text>
<circle cx="16.5" cy="144.3" r="4.8" fill="none" stroke="#e8e8e8" stroke-width="1.2"/><path d="M16.5 141.5V144.5l2 2" stroke="#e8e8e8" stroke-width="1.1" fill="none"/>
<text x="27.0" y="148.0" font-size="11.0" fill="#f0f0f0" textLength="220.0" lengthAdjust="spacingAndGlyphs" stroke="#f0f0f0" stroke-width="0.30">08.10.2012 - 02.04.2018&#160;&#160; (6 Jahre, 1 Woche)</text>
<defs><clipPath id="pf"><rect x="4" y="566" width="1381" height="72"/></clipPath><clipPath id="ps"><rect x="4" y="641" width="1381" height="72"/></clipPath><clipPath id="pr"><rect x="4" y="716" width="1381" height="56"/></clipPath><clipPath id="pm"><rect x="4" y="775" width="1381" height="50"/></clipPath></defs>
<rect x="4" y="566" width="1442" height="72" fill="#222222"/>
<rect x="1385" y="566" width="1" height="72" fill="#000"/>
<line x1="57.5" y1="566" x2="57.5" y2="638" stroke="#2c2c2c" stroke-width="1"/>
<line x1="159.5" y1="566" x2="159.5" y2="638" stroke="#2c2c2c" stroke-width="1"/>
<line x1="268.5" y1="566" x2="268.5" y2="638" stroke="#2c2c2c" stroke-width="1"/>
<line x1="374.5" y1="566" x2="374.5" y2="638" stroke="#2c2c2c" stroke-width="1"/>
<line x1="479.5" y1="566" x2="479.5" y2="638" stroke="#2c2c2c" stroke-width="1"/>
<line x1="585.5" y1="566" x2="585.5" y2="638" stroke="#2c2c2c" stroke-width="1"/>
<line x1="690.5" y1="566" x2="690.5" y2="638" stroke="#2c2c2c" stroke-width="1"/>
<line x1="796.5" y1="566" x2="796.5" y2="638" stroke="#2c2c2c" stroke-width="1"/>
<line x1="901.5" y1="566" x2="901.5" y2="638" stroke="#2c2c2c" stroke-width="1"/>
<line x1="1007.5" y1="566" x2="1007.5" y2="638" stroke="#2c2c2c" stroke-width="1"/>
<line x1="1112.5" y1="566" x2="1112.5" y2="638" stroke="#2c2c2c" stroke-width="1"/>
<line x1="4" y1="569.5" x2="1385" y2="569.5" stroke="#2e2e2e" stroke-width="1"/>
<line x1="4" y1="635.0" x2="1385" y2="635.0" stroke="#2e2e2e" stroke-width="1"/>
<line x1="4" y1="582.5" x2="1385" y2="582.5" stroke="#5ea82a" stroke-width="1" stroke-dasharray="1,2"/>
<line x1="4" y1="621.5" x2="1385" y2="621.5" stroke="#c03434" stroke-width="1" stroke-dasharray="1,2"/>
<rect x="1386" y="569.0" width="4" height="1" fill="#555"/>
<rect x="1386" y="634.5" width="4" height="1" fill="#555"/>
<defs><clipPath id="fh1"><rect x="4" y="566" width="1381" height="16.1"/></clipPath><clipPath id="fl1"><rect x="4" y="621.4" width="1381" height="16.6"/></clipPath></defs>
<polygon clip-path="url(#fh1)" points="5.2,578.8 9.3,574.2 13.3,593.9 17.4,620.3 21.4,627.0 25.5,621.6 29.5,579.0 33.6,578.5 37.6,583.5 41.7,595.3 45.8,605.6 49.8,631.2 53.9,615.1 57.9,596.4 62.0,613.1 66.0,573.8 70.1,571.7 74.1,628.3 78.2,577.6 82.2,579.0 86.3,577.7 90.4,575.0 94.4,581.7 98.5,577.5 102.5,574.0 106.6,589.8 110.6,583.0 114.7,592.0 118.7,616.6 122.8,604.0 126.8,593.5 130.9,604.6 135.0,589.2 139.0,592.7 143.1,592.9 147.1,593.8 151.2,619.8 155.2,626.9 159.3,624.6 163.3,608.4 167.4,593.3 171.5,577.6 175.5,576.6 179.6,611.9 183.6,623.4 187.7,616.2 191.7,625.9 195.8,627.0 199.8,616.1 203.9,606.2 207.9,597.5 212.0,595.1 216.1,589.4 220.1,576.0 224.2,575.4 228.2,577.4 232.3,572.2 236.3,572.4 240.4,571.7 244.4,576.1 248.5,592.8 252.6,623.5 256.6,597.3 260.7,592.8 264.7,585.1 268.8,582.3 272.8,581.5 276.9,594.5 280.9,632.1 285.0,623.5 289.0,608.9 293.1,607.1 297.2,589.4 301.2,611.3 305.3,629.4 309.3,610.2 313.4,592.2 317.4,605.5 321.5,628.8 325.5,616.8 329.6,595.9 333.7,593.0 337.7,576.1 341.8,574.8 345.8,574.9 349.9,577.4 353.9,576.6 358.0,575.4 362.0,575.3 366.1,597.8 370.1,572.3 374.2,599.2 378.3,599.1 382.3,593.9 386.4,615.9 390.4,626.3 394.5,600.4 398.5,591.7 402.6,577.1 406.6,575.9 410.7,572.3 414.8,576.9 418.8,581.8 422.9,595.7 426.9,616.3 431.0,619.3 435.0,601.9 439.1,586.6 443.1,588.1 447.2,585.0 451.2,576.2 455.3,576.2 459.4,578.5 463.4,594.1 467.5,593.4 471.5,601.1 475.6,605.6 479.6,575.2 483.7,577.5 487.7,575.6 491.8,572.1 495.9,581.8 499.9,585.8 504.0,598.5 508.0,580.8 512.1,572.3 516.1,572.8 520.2,572.4 524.2,579.3 528.3,570.7 532.4,575.2 536.4,617.9 540.5,613.8 544.5,633.5 548.6,618.3 552.6,618.4 556.7,602.7 560.7,622.8 564.8,628.6 568.8,628.2 572.9,629.3 577.0,619.4 581.0,615.5 585.1,582.4 589.1,580.7 593.2,609.6 597.2,612.5 601.3,630.9 605.3,627.4 609.4,633.7 613.5,603.8 617.5,609.5 621.6,608.5 625.6,616.5 629.7,617.3 633.7,625.7 637.8,622.8 641.8,613.7 645.9,578.4 649.9,571.3 654.0,572.7 658.1,578.2 662.1,572.3 666.2,574.4 670.2,595.6 674.3,633.2 678.3,619.3 682.4,617.8 686.4,611.9 690.5,629.1 694.5,632.9 698.6,609.2 702.7,621.4 706.7,628.8 710.8,632.7 714.8,617.0 718.9,596.0 722.9,584.0 727.0,606.8 731.0,624.9 735.1,618.2 739.2,629.0 743.2,596.9 747.3,582.5 751.3,572.4 755.4,575.4 759.4,592.8 763.5,580.9 767.5,576.6 771.6,576.2 775.6,579.9 779.7,582.6 783.8,595.2 787.8,598.7 791.9,573.2 795.9,571.0 800.0,572.7 804.0,571.0 808.1,571.5 812.1,572.5 816.2,580.8 820.3,601.3 824.3,627.5 828.4,613.8 832.4,626.1 836.5,605.2 840.5,575.3 844.6,600.1 848.6,590.3 852.7,579.7 856.8,584.6 860.8,625.3 864.9,625.8 868.9,597.1 873.0,597.1 877.0,588.9 881.1,609.2 885.1,596.0 889.2,571.3 893.2,574.9 897.3,576.2 901.4,574.6 905.4,578.5 909.5,590.6 913.5,587.6 917.6,597.1 921.6,621.5 925.7,614.9 929.7,579.3 933.8,579.7 937.9,611.2 941.9,586.8 946.0,589.5 950.0,571.2 954.1,585.6 958.1,596.0 962.2,628.0 966.2,585.2 970.3,579.6 974.3,573.6 978.4,608.2 982.5,620.8 986.5,609.3 990.6,623.5 994.6,623.6 998.7,576.6 1002.7,625.3 1006.8,632.8 1010.8,617.8 1014.9,631.4 1018.9,630.5 1023.0,629.2 1027.1,630.1 1031.1,628.5 1035.2,615.2 1039.2,598.3 1043.3,575.2 1047.3,574.1 1051.4,582.1 1055.4,611.6 1059.5,603.7 1063.6,610.7 1067.6,632.3 1071.7,628.3 1075.7,615.7 1079.8,629.8 1083.8,620.8 1087.9,629.0 1091.9,620.3 1096.0,629.9 1100.0,582.1 1104.1,594.3 1108.2,603.6 1112.2,571.9 1116.3,598.4 1120.3,619.9 1124.4,610.7 1128.4,627.2 1132.5,628.2 1136.5,617.1 1140.6,623.0 1144.7,631.3 1148.7,618.5 1152.8,612.0 1156.8,629.7 1160.9,607.2 1164.9,594.9 1164.9,582.1 5.2,582.1" fill="#34502a"/>
<polygon clip-path="url(#fl1)" points="5.2,578.8 9.3,574.2 13.3,593.9 17.4,620.3 21.4,627.0 25.5,621.6 29.5,579.0 33.6,578.5 37.6,583.5 41.7,595.3 45.8,605.6 49.8,631.2 53.9,615.1 57.9,596.4 62.0,613.1 66.0,573.8 70.1,571.7 74.1,628.3 78.2,577.6 82.2,579.0 86.3,577.7 90.4,575.0 94.4,581.7 98.5,577.5 102.5,574.0 106.6,589.8 110.6,583.0 114.7,592.0 118.7,616.6 122.8,604.0 126.8,593.5 130.9,604.6 135.0,589.2 139.0,592.7 143.1,592.9 147.1,593.8 151.2,619.8 155.2,626.9 159.3,624.6 163.3,608.4 167.4,593.3 171.5,577.6 175.5,576.6 179.6,611.9 183.6,623.4 187.7,616.2 191.7,625.9 195.8,627.0 199.8,616.1 203.9,606.2 207.9,597.5 212.0,595.1 216.1,589.4 220.1,576.0 224.2,575.4 228.2,577.4 232.3,572.2 236.3,572.4 240.4,571.7 244.4,576.1 248.5,592.8 252.6,623.5 256.6,597.3 260.7,592.8 264.7,585.1 268.8,582.3 272.8,581.5 276.9,594.5 280.9,632.1 285.0,623.5 289.0,608.9 293.1,607.1 297.2,589.4 301.2,611.3 305.3,629.4 309.3,610.2 313.4,592.2 317.4,605.5 321.5,628.8 325.5,616.8 329.6,595.9 333.7,593.0 337.7,576.1 341.8,574.8 345.8,574.9 349.9,577.4 353.9,576.6 358.0,575.4 362.0,575.3 366.1,597.8 370.1,572.3 374.2,599.2 378.3,599.1 382.3,593.9 386.4,615.9 390.4,626.3 394.5,600.4 398.5,591.7 402.6,577.1 406.6,575.9 410.7,572.3 414.8,576.9 418.8,581.8 422.9,595.7 426.9,616.3 431.0,619.3 435.0,601.9 439.1,586.6 443.1,588.1 447.2,585.0 451.2,576.2 455.3,576.2 459.4,578.5 463.4,594.1 467.5,593.4 471.5,601.1 475.6,605.6 479.6,575.2 483.7,577.5 487.7,575.6 491.8,572.1 495.9,581.8 499.9,585.8 504.0,598.5 508.0,580.8 512.1,572.3 516.1,572.8 520.2,572.4 524.2,579.3 528.3,570.7 532.4,575.2 536.4,617.9 540.5,613.8 544.5,633.5 548.6,618.3 552.6,618.4 556.7,602.7 560.7,622.8 564.8,628.6 568.8,628.2 572.9,629.3 577.0,619.4 581.0,615.5 585.1,582.4 589.1,580.7 593.2,609.6 597.2,612.5 601.3,630.9 605.3,627.4 609.4,633.7 613.5,603.8 617.5,609.5 621.6,608.5 625.6,616.5 629.7,617.3 633.7,625.7 637.8,622.8 641.8,613.7 645.9,578.4 649.9,571.3 654.0,572.7 658.1,578.2 662.1,572.3 666.2,574.4 670.2,595.6 674.3,633.2 678.3,619.3 682.4,617.8 686.4,611.9 690.5,629.1 694.5,632.9 698.6,609.2 702.7,621.4 706.7,628.8 710.8,632.7 714.8,617.0 718.9,596.0 722.9,584.0 727.0,606.8 731.0,624.9 735.1,618.2 739.2,629.0 743.2,596.9 747.3,582.5 751.3,572.4 755.4,575.4 759.4,592.8 763.5,580.9 767.5,576.6 771.6,576.2 775.6,579.9 779.7,582.6 783.8,595.2 787.8,598.7 791.9,573.2 795.9,571.0 800.0,572.7 804.0,571.0 808.1,571.5 812.1,572.5 816.2,580.8 820.3,601.3 824.3,627.5 828.4,613.8 832.4,626.1 836.5,605.2 840.5,575.3 844.6,600.1 848.6,590.3 852.7,579.7 856.8,584.6 860.8,625.3 864.9,625.8 868.9,597.1 873.0,597.1 877.0,588.9 881.1,609.2 885.1,596.0 889.2,571.3 893.2,574.9 897.3,576.2 901.4,574.6 905.4,578.5 909.5,590.6 913.5,587.6 917.6,597.1 921.6,621.5 925.7,614.9 929.7,579.3 933.8,579.7 937.9,611.2 941.9,586.8 946.0,589.5 950.0,571.2 954.1,585.6 958.1,596.0 962.2,628.0 966.2,585.2 970.3,579.6 974.3,573.6 978.4,608.2 982.5,620.8 986.5,609.3 990.6,623.5 994.6,623.6 998.7,576.6 1002.7,625.3 1006.8,632.8 1010.8,617.8 1014.9,631.4 1018.9,630.5 1023.0,629.2 1027.1,630.1 1031.1,628.5 1035.2,615.2 1039.2,598.3 1043.3,575.2 1047.3,574.1 1051.4,582.1 1055.4,611.6 1059.5,603.7 1063.6,610.7 1067.6,632.3 1071.7,628.3 1075.7,615.7 1079.8,629.8 1083.8,620.8 1087.9,629.0 1091.9,620.3 1096.0,629.9 1100.0,582.1 1104.1,594.3 1108.2,603.6 1112.2,571.9 1116.3,598.4 1120.3,619.9 1124.4,610.7 1128.4,627.2 1132.5,628.2 1136.5,617.1 1140.6,623.0 1144.7,631.3 1148.7,618.5 1152.8,612.0 1156.8,629.7 1160.9,607.2 1164.9,594.9 1164.9,621.4 5.2,621.4" fill="#4e2626"/>
<g clip-path="url(#pf)">
<polyline points="5.2,578.8 9.3,574.2 13.3,593.9 17.4,620.3 21.4,627.0 25.5,621.6 29.5,579.0 33.6,578.5 37.6,583.5 41.7,595.3 45.8,605.6 49.8,631.2 53.9,615.1 57.9,596.4 62.0,613.1 66.0,573.8 70.1,571.7 74.1,628.3 78.2,577.6 82.2,579.0 86.3,577.7 90.4,575.0 94.4,581.7 98.5,577.5 102.5,574.0 106.6,589.8 110.6,583.0 114.7,592.0 118.7,616.6 122.8,604.0 126.8,593.5 130.9,604.6 135.0,589.2 139.0,592.7 143.1,592.9 147.1,593.8 151.2,619.8 155.2,626.9 159.3,624.6 163.3,608.4 167.4,593.3 171.5,577.6 175.5,576.6 179.6,611.9 183.6,623.4 187.7,616.2 191.7,625.9 195.8,627.0 199.8,616.1 203.9,606.2 207.9,597.5 212.0,595.1 216.1,589.4 220.1,576.0 224.2,575.4 228.2,577.4 232.3,572.2 236.3,572.4 240.4,571.7 244.4,576.1 248.5,592.8 252.6,623.5 256.6,597.3 260.7,592.8 264.7,585.1 268.8,582.3 272.8,581.5 276.9,594.5 280.9,632.1 285.0,623.5 289.0,608.9 293.1,607.1 297.2,589.4 301.2,611.3 305.3,629.4 309.3,610.2 313.4,592.2 317.4,605.5 321.5,628.8 325.5,616.8 329.6,595.9 333.7,593.0 337.7,576.1 341.8,574.8 345.8,574.9 349.9,577.4 353.9,576.6 358.0,575.4 362.0,575.3 366.1,597.8 370.1,572.3 374.2,599.2 378.3,599.1 382.3,593.9 386.4,615.9 390.4,626.3 394.5,600.4 398.5,591.7 402.6,577.1 406.6,575.9 410.7,572.3 414.8,576.9 418.8,581.8 422.9,595.7 426.9,616.3 431.0,619.3 435.0,601.9 439.1,586.6 443.1,588.1 447.2,585.0 451.2,576.2 455.3,576.2 459.4,578.5 463.4,594.1 467.5,593.4 471.5,601.1 475.6,605.6 479.6,575.2 483.7,577.5 487.7,575.6 491.8,572.1 495.9,581.8 499.9,585.8 504.0,598.5 508.0,580.8 512.1,572.3 516.1,572.8 520.2,572.4 524.2,579.3 528.3,570.7 532.4,575.2 536.4,617.9 540.5,613.8 544.5,633.5 548.6,618.3 552.6,618.4 556.7,602.7 560.7,622.8 564.8,628.6 568.8,628.2 572.9,629.3 577.0,619.4 581.0,615.5 585.1,582.4 589.1,580.7 593.2,609.6 597.2,612.5 601.3,630.9 605.3,627.4 609.4,633.7 613.5,603.8 617.5,609.5 621.6,608.5 625.6,616.5 629.7,617.3 633.7,625.7 637.8,622.8 641.8,613.7 645.9,578.4 649.9,571.3 654.0,572.7 658.1,578.2 662.1,572.3 666.2,574.4 670.2,595.6 674.3,633.2 678.3,619.3 682.4,617.8 686.4,611.9 690.5,629.1 694.5,632.9 698.6,609.2 702.7,621.4 706.7,628.8 710.8,632.7 714.8,617.0 718.9,596.0 722.9,584.0 727.0,606.8 731.0,624.9 735.1,618.2 739.2,629.0 743.2,596.9 747.3,582.5 751.3,572.4 755.4,575.4 759.4,592.8 763.5,580.9 767.5,576.6 771.6,576.2 775.6,579.9 779.7,582.6 783.8,595.2 787.8,598.7 791.9,573.2 795.9,571.0 800.0,572.7 804.0,571.0 808.1,571.5 812.1,572.5 816.2,580.8 820.3,601.3 824.3,627.5 828.4,613.8 832.4,626.1 836.5,605.2 840.5,575.3 844.6,600.1 848.6,590.3 852.7,579.7 856.8,584.6 860.8,625.3 864.9,625.8 868.9,597.1 873.0,597.1 877.0,588.9 881.1,609.2 885.1,596.0 889.2,571.3 893.2,574.9 897.3,576.2 901.4,574.6 905.4,578.5 909.5,590.6 913.5,587.6 917.6,597.1 921.6,621.5 925.7,614.9 929.7,579.3 933.8,579.7 937.9,611.2 941.9,586.8 946.0,589.5 950.0,571.2 954.1,585.6 958.1,596.0 962.2,628.0 966.2,585.2 970.3,579.6 974.3,573.6 978.4,608.2 982.5,620.8 986.5,609.3 990.6,623.5 994.6,623.6 998.7,576.6 1002.7,625.3 1006.8,632.8 1010.8,617.8 1014.9,631.4 1018.9,630.5 1023.0,629.2 1027.1,630.1 1031.1,628.5 1035.2,615.2 1039.2,598.3 1043.3,575.2 1047.3,574.1 1051.4,582.1 1055.4,611.6 1059.5,603.7 1063.6,610.7 1067.6,632.3 1071.7,628.3 1075.7,615.7 1079.8,629.8 1083.8,620.8 1087.9,629.0 1091.9,620.3 1096.0,629.9 1100.0,582.1 1104.1,594.3 1108.2,603.6 1112.2,571.9 1116.3,598.4 1120.3,619.9 1124.4,610.7 1128.4,627.2 1132.5,628.2 1136.5,617.1 1140.6,623.0 1144.7,631.3 1148.7,618.5 1152.8,612.0 1156.8,629.7 1160.9,607.2 1164.9,594.9" fill="none" stroke="#ffd000" stroke-width="2.1" stroke-linejoin="round"/>
<polyline points="5.2,588.6 9.3,583.4 13.3,582.3 17.4,596.1 21.4,613.7 25.5,623.0 29.5,609.2 33.6,593.0 37.6,580.3 41.7,585.8 45.8,594.8 49.8,610.7 53.9,617.3 57.9,614.2 62.0,608.2 66.0,594.4 70.1,586.2 74.1,591.3 78.2,592.5 82.2,595.0 86.3,578.1 90.4,577.2 94.4,578.1 98.5,578.1 102.5,577.7 106.6,580.4 110.6,582.2 114.7,588.3 118.7,597.2 122.8,604.2 126.8,604.7 130.9,600.7 135.0,595.8 139.0,595.5 143.1,591.6 147.1,593.2 151.2,602.2 155.2,613.5 159.3,623.7 163.3,620.0 167.4,608.8 171.5,593.1 175.5,582.5 179.6,588.7 183.6,604.0 187.7,617.2 191.7,621.9 195.8,623.1 199.8,623.0 203.9,616.4 207.9,606.6 212.0,599.6 216.1,594.0 220.1,586.8 224.2,580.3 228.2,576.2 232.3,575.0 236.3,574.0 240.4,572.1 244.4,573.4 248.5,580.2 252.6,597.5 256.6,604.5 260.7,604.5 264.7,591.7 268.8,586.7 272.8,583.0 276.9,586.1 280.9,602.7 285.0,616.7 289.0,621.5 293.1,613.2 297.2,601.8 301.2,602.6 305.3,610.0 309.3,617.0 313.4,610.6 317.4,602.6 321.5,608.8 325.5,617.0 329.6,613.8 333.7,601.9 337.7,588.3 341.8,581.3 345.8,575.3 349.9,575.7 353.9,576.3 358.0,576.5 362.0,575.7 366.1,582.8 370.1,581.8 374.2,589.8 378.3,590.2 382.3,597.4 386.4,603.0 390.4,612.0 394.5,614.2 398.5,606.1 402.6,589.7 406.6,581.6 410.7,575.1 414.8,575.0 418.8,577.0 422.9,584.8 426.9,597.9 431.0,610.5 435.0,612.5 439.1,602.6 443.1,592.2 447.2,586.6 451.2,583.1 455.3,579.1 459.4,576.9 463.4,582.9 467.5,588.6 471.5,596.2 475.6,600.1 479.6,594.0 483.7,586.1 487.7,576.1 491.8,575.1 495.9,576.5 499.9,579.9 504.0,588.7 508.0,588.3 512.1,583.8 516.1,575.3 520.2,572.5 524.2,574.8 528.3,574.1 532.4,575.0 536.4,587.9 540.5,602.3 544.5,621.8 548.6,621.9 552.6,623.4 556.7,613.2 560.7,614.7 564.8,618.1 568.8,626.6 572.9,628.7 577.0,625.6 581.0,621.4 585.1,605.7 589.1,592.9 593.2,590.9 597.2,600.9 601.3,617.7 605.3,623.6 609.4,630.7 613.5,621.6 617.5,615.7 621.6,607.3 625.6,611.5 629.7,614.1 633.7,619.9 637.8,621.9 641.8,620.7 645.9,605.0 649.9,587.8 654.0,574.1 658.1,574.1 662.1,574.4 666.2,575.0 670.2,580.8 674.3,601.1 678.3,616.0 682.4,623.4 686.4,616.3 690.5,619.6 694.5,624.6 698.6,623.7 702.7,621.1 706.7,619.8 710.8,627.6 714.8,626.2 718.9,615.3 722.9,599.0 727.0,595.6 731.0,605.2 735.1,616.7 739.2,624.0 743.2,614.7 747.3,602.8 751.3,583.9 755.4,576.8 759.4,580.2 763.5,583.0 767.5,583.4 771.6,577.9 775.6,577.6 779.7,579.6 783.8,585.9 787.8,592.2 791.9,589.0 795.9,581.0 800.0,572.3 804.0,571.5 808.1,571.7 812.1,571.7 816.2,575.0 820.3,584.9 824.3,603.2 828.4,614.2 832.4,622.5 836.5,615.1 840.5,602.2 844.6,593.6 848.6,588.6 852.7,590.1 856.8,584.9 860.8,596.5 864.9,611.9 868.9,616.1 873.0,606.7 877.0,594.4 881.1,598.4 885.1,598.0 889.2,592.2 893.2,580.7 897.3,574.1 901.4,575.2 905.4,576.4 909.5,581.2 913.5,585.6 917.6,591.8 921.6,602.0 925.7,611.1 929.7,605.2 933.8,591.3 937.9,590.0 941.9,592.6 946.0,595.8 950.0,582.5 954.1,582.1 958.1,584.3 962.2,603.2 966.2,603.1 970.3,597.6 974.3,579.5 978.4,587.1 982.5,600.9 986.5,612.8 990.6,617.9 994.6,618.8 998.7,607.9 1002.7,608.5 1006.8,611.6 1010.8,625.3 1014.9,627.3 1018.9,626.6 1023.0,630.3 1027.1,629.9 1031.1,629.3 1035.2,624.6 1039.2,614.0 1043.3,596.2 1047.3,582.5 1051.4,577.1 1055.4,589.3 1059.5,599.1 1063.6,608.7 1067.6,615.6 1071.7,623.8 1075.7,625.4 1079.8,624.6 1083.8,622.1 1087.9,626.5 1091.9,623.4 1096.0,626.4 1100.0,610.8 1104.1,602.1 1108.2,593.3 1112.2,589.9 1116.3,591.3 1120.3,596.8 1124.4,609.7 1128.4,619.3 1132.5,622.0 1136.5,624.2 1140.6,622.8 1144.7,623.8 1148.7,624.2 1152.8,620.6 1156.8,620.1 1160.9,616.3 1164.9,610.6" fill="none" stroke="#2aa2d4" stroke-width="2.1" stroke-linejoin="round"/>
</g>
<rect x="4.0" y="568.0" width="152.0" height="22.0" fill="#1e1e1e" fill-opacity="0.72"/>
<rect x="4" y="641" width="1442" height="72" fill="#222222"/>
<rect x="1385" y="641" width="1" height="72" fill="#000"/>
<line x1="57.5" y1="641" x2="57.5" y2="713" stroke="#2c2c2c" stroke-width="1"/>
<line x1="159.5" y1="641" x2="159.5" y2="713" stroke="#2c2c2c" stroke-width="1"/>
<line x1="268.5" y1="641" x2="268.5" y2="713" stroke="#2c2c2c" stroke-width="1"/>
<line x1="374.5" y1="641" x2="374.5" y2="713" stroke="#2c2c2c" stroke-width="1"/>
<line x1="479.5" y1="641" x2="479.5" y2="713" stroke="#2c2c2c" stroke-width="1"/>
<line x1="585.5" y1="641" x2="585.5" y2="713" stroke="#2c2c2c" stroke-width="1"/>
<line x1="690.5" y1="641" x2="690.5" y2="713" stroke="#2c2c2c" stroke-width="1"/>
<line x1="796.5" y1="641" x2="796.5" y2="713" stroke="#2c2c2c" stroke-width="1"/>
<line x1="901.5" y1="641" x2="901.5" y2="713" stroke="#2c2c2c" stroke-width="1"/>
<line x1="1007.5" y1="641" x2="1007.5" y2="713" stroke="#2c2c2c" stroke-width="1"/>
<line x1="1112.5" y1="641" x2="1112.5" y2="713" stroke="#2c2c2c" stroke-width="1"/>
<line x1="4" y1="644.5" x2="1385" y2="644.5" stroke="#2e2e2e" stroke-width="1"/>
<line x1="4" y1="710.0" x2="1385" y2="710.0" stroke="#2e2e2e" stroke-width="1"/>
<line x1="4" y1="657.5" x2="1385" y2="657.5" stroke="#5ea82a" stroke-width="1" stroke-dasharray="1,2"/>
<line x1="4" y1="696.5" x2="1385" y2="696.5" stroke="#c03434" stroke-width="1" stroke-dasharray="1,2"/>
<rect x="1386" y="644.0" width="4" height="1" fill="#555"/>
<rect x="1386" y="709.5" width="4" height="1" fill="#555"/>
<defs><clipPath id="fh2"><rect x="4" y="641" width="1381" height="16.1"/></clipPath><clipPath id="fl2"><rect x="4" y="696.4" width="1381" height="16.6"/></clipPath></defs>
<polygon clip-path="url(#fh2)" points="5.2,663.6 9.3,658.4 13.3,657.3 17.4,671.1 21.4,688.7 25.5,698.0 29.5,684.2 33.6,668.0 37.6,655.3 41.7,660.8 45.8,669.8 49.8,685.7 53.9,692.3 57.9,689.2 62.0,683.2 66.0,669.4 70.1,661.2 74.1,666.3 78.2,667.5 82.2,670.0 86.3,653.1 90.4,652.2 94.4,653.1 98.5,653.1 102.5,652.7 106.6,655.4 110.6,657.2 114.7,663.3 118.7,672.2 122.8,679.2 126.8,679.7 130.9,675.7 135.0,670.8 139.0,670.5 143.1,666.6 147.1,668.2 151.2,677.2 155.2,688.5 159.3,698.7 163.3,695.0 167.4,683.8 171.5,668.1 175.5,657.5 179.6,663.7 183.6,679.0 187.7,692.2 191.7,696.9 195.8,698.1 199.8,698.0 203.9,691.4 207.9,681.6 212.0,674.6 216.1,669.0 220.1,661.8 224.2,655.3 228.2,651.2 232.3,650.0 236.3,649.0 240.4,647.1 244.4,648.4 248.5,655.2 252.6,672.5 256.6,679.5 260.7,679.5 264.7,666.7 268.8,661.7 272.8,658.0 276.9,661.1 280.9,677.7 285.0,691.7 289.0,696.5 293.1,688.2 297.2,676.8 301.2,677.6 305.3,685.0 309.3,692.0 313.4,685.6 317.4,677.6 321.5,683.8 325.5,692.0 329.6,688.8 333.7,676.9 337.7,663.3 341.8,656.3 345.8,650.3 349.9,650.7 353.9,651.3 358.0,651.5 362.0,650.7 366.1,657.8 370.1,656.8 374.2,664.8 378.3,665.2 382.3,672.4 386.4,678.0 390.4,687.0 394.5,689.2 398.5,681.1 402.6,664.7 406.6,656.6 410.7,650.1 414.8,650.0 418.8,652.0 422.9,659.8 426.9,672.9 431.0,685.5 435.0,687.5 439.1,677.6 443.1,667.2 447.2,661.6 451.2,658.1 455.3,654.1 459.4,651.9 463.4,657.9 467.5,663.6 471.5,671.2 475.6,675.1 479.6,669.0 483.7,661.1 487.7,651.1 491.8,650.1 495.9,651.5 499.9,654.9 504.0,663.7 508.0,663.3 512.1,658.8 516.1,650.3 520.2,647.5 524.2,649.8 528.3,649.1 532.4,650.0 536.4,662.9 540.5,677.3 544.5,696.8 548.6,696.9 552.6,698.4 556.7,688.2 560.7,689.7 564.8,693.1 568.8,701.6 572.9,703.7 577.0,700.6 581.0,696.4 585.1,680.7 589.1,667.9 593.2,665.9 597.2,675.9 601.3,692.7 605.3,698.6 609.4,705.7 613.5,696.6 617.5,690.7 621.6,682.3 625.6,686.5 629.7,689.1 633.7,694.9 637.8,696.9 641.8,695.7 645.9,680.0 649.9,662.8 654.0,649.1 658.1,649.1 662.1,649.4 666.2,650.0 670.2,655.8 674.3,676.1 678.3,691.0 682.4,698.4 686.4,691.3 690.5,694.6 694.5,699.6 698.6,698.7 702.7,696.1 706.7,694.8 710.8,702.6 714.8,701.2 718.9,690.3 722.9,674.0 727.0,670.6 731.0,680.2 735.1,691.7 739.2,699.0 743.2,689.7 747.3,677.8 751.3,658.9 755.4,651.8 759.4,655.2 763.5,658.0 767.5,658.4 771.6,652.9 775.6,652.6 779.7,654.6 783.8,660.9 787.8,667.2 791.9,664.0 795.9,656.0 800.0,647.3 804.0,646.5 808.1,646.7 812.1,646.7 816.2,650.0 820.3,659.9 824.3,678.2 828.4,689.2 832.4,697.5 836.5,690.1 840.5,677.2 844.6,668.6 848.6,663.6 852.7,665.1 856.8,659.9 860.8,671.5 864.9,686.9 868.9,691.1 873.0,681.7 877.0,669.4 881.1,673.4 885.1,673.0 889.2,667.2 893.2,655.7 897.3,649.1 901.4,650.2 905.4,651.4 909.5,656.2 913.5,660.6 917.6,666.8 921.6,677.0 925.7,686.1 929.7,680.2 933.8,666.3 937.9,665.0 941.9,667.6 946.0,670.8 950.0,657.5 954.1,657.1 958.1,659.3 962.2,678.2 966.2,678.1 970.3,672.6 974.3,654.5 978.4,662.1 982.5,675.9 986.5,687.8 990.6,692.9 994.6,693.8 998.7,682.9 1002.7,683.5 1006.8,686.6 1010.8,700.3 1014.9,702.3 1018.9,701.6 1023.0,705.3 1027.1,704.9 1031.1,704.3 1035.2,699.6 1039.2,689.0 1043.3,671.2 1047.3,657.5 1051.4,652.1 1055.4,664.3 1059.5,674.1 1063.6,683.7 1067.6,690.6 1071.7,698.8 1075.7,700.4 1079.8,699.6 1083.8,697.1 1087.9,701.5 1091.9,698.4 1096.0,701.4 1100.0,685.8 1104.1,677.1 1108.2,668.3 1112.2,664.9 1116.3,666.3 1120.3,671.8 1124.4,684.7 1128.4,694.3 1132.5,697.0 1136.5,699.2 1140.6,697.8 1144.7,698.8 1148.7,699.2 1152.8,695.6 1156.8,695.1 1160.9,691.3 1164.9,685.6 1164.9,657.1 5.2,657.1" fill="#34502a"/>
<polygon clip-path="url(#fl2)" points="5.2,663.6 9.3,658.4 13.3,657.3 17.4,671.1 21.4,688.7 25.5,698.0 29.5,684.2 33.6,668.0 37.6,655.3 41.7,660.8 45.8,669.8 49.8,685.7 53.9,692.3 57.9,689.2 62.0,683.2 66.0,669.4 70.1,661.2 74.1,666.3 78.2,667.5 82.2,670.0 86.3,653.1 90.4,652.2 94.4,653.1 98.5,653.1 102.5,652.7 106.6,655.4 110.6,657.2 114.7,663.3 118.7,672.2 122.8,679.2 126.8,679.7 130.9,675.7 135.0,670.8 139.0,670.5 143.1,666.6 147.1,668.2 151.2,677.2 155.2,688.5 159.3,698.7 163.3,695.0 167.4,683.8 171.5,668.1 175.5,657.5 179.6,663.7 183.6,679.0 187.7,692.2 191.7,696.9 195.8,698.1 199.8,698.0 203.9,691.4 207.9,681.6 212.0,674.6 216.1,669.0 220.1,661.8 224.2,655.3 228.2,651.2 232.3,650.0 236.3,649.0 240.4,647.1 244.4,648.4 248.5,655.2 252.6,672.5 256.6,679.5 260.7,679.5 264.7,666.7 268.8,661.7 272.8,658.0 276.9,661.1 280.9,677.7 285.0,691.7 289.0,696.5 293.1,688.2 297.2,676.8 301.2,677.6 305.3,685.0 309.3,692.0 313.4,685.6 317.4,677.6 321.5,683.8 325.5,692.0 329.6,688.8 333.7,676.9 337.7,663.3 341.8,656.3 345.8,650.3 349.9,650.7 353.9,651.3 358.0,651.5 362.0,650.7 366.1,657.8 370.1,656.8 374.2,664.8 378.3,665.2 382.3,672.4 386.4,678.0 390.4,687.0 394.5,689.2 398.5,681.1 402.6,664.7 406.6,656.6 410.7,650.1 414.8,650.0 418.8,652.0 422.9,659.8 426.9,672.9 431.0,685.5 435.0,687.5 439.1,677.6 443.1,667.2 447.2,661.6 451.2,658.1 455.3,654.1 459.4,651.9 463.4,657.9 467.5,663.6 471.5,671.2 475.6,675.1 479.6,669.0 483.7,661.1 487.7,651.1 491.8,650.1 495.9,651.5 499.9,654.9 504.0,663.7 508.0,663.3 512.1,658.8 516.1,650.3 520.2,647.5 524.2,649.8 528.3,649.1 532.4,650.0 536.4,662.9 540.5,677.3 544.5,696.8 548.6,696.9 552.6,698.4 556.7,688.2 560.7,689.7 564.8,693.1 568.8,701.6 572.9,703.7 577.0,700.6 581.0,696.4 585.1,680.7 589.1,667.9 593.2,665.9 597.2,675.9 601.3,692.7 605.3,698.6 609.4,705.7 613.5,696.6 617.5,690.7 621.6,682.3 625.6,686.5 629.7,689.1 633.7,694.9 637.8,696.9 641.8,695.7 645.9,680.0 649.9,662.8 654.0,649.1 658.1,649.1 662.1,649.4 666.2,650.0 670.2,655.8 674.3,676.1 678.3,691.0 682.4,698.4 686.4,691.3 690.5,694.6 694.5,699.6 698.6,698.7 702.7,696.1 706.7,694.8 710.8,702.6 714.8,701.2 718.9,690.3 722.9,674.0 727.0,670.6 731.0,680.2 735.1,691.7 739.2,699.0 743.2,689.7 747.3,677.8 751.3,658.9 755.4,651.8 759.4,655.2 763.5,658.0 767.5,658.4 771.6,652.9 775.6,652.6 779.7,654.6 783.8,660.9 787.8,667.2 791.9,664.0 795.9,656.0 800.0,647.3 804.0,646.5 808.1,646.7 812.1,646.7 816.2,650.0 820.3,659.9 824.3,678.2 828.4,689.2 832.4,697.5 836.5,690.1 840.5,677.2 844.6,668.6 848.6,663.6 852.7,665.1 856.8,659.9 860.8,671.5 864.9,686.9 868.9,691.1 873.0,681.7 877.0,669.4 881.1,673.4 885.1,673.0 889.2,667.2 893.2,655.7 897.3,649.1 901.4,650.2 905.4,651.4 909.5,656.2 913.5,660.6 917.6,666.8 921.6,677.0 925.7,686.1 929.7,680.2 933.8,666.3 937.9,665.0 941.9,667.6 946.0,670.8 950.0,657.5 954.1,657.1 958.1,659.3 962.2,678.2 966.2,678.1 970.3,672.6 974.3,654.5 978.4,662.1 982.5,675.9 986.5,687.8 990.6,692.9 994.6,693.8 998.7,682.9 1002.7,683.5 1006.8,686.6 1010.8,700.3 1014.9,702.3 1018.9,701.6 1023.0,705.3 1027.1,704.9 1031.1,704.3 1035.2,699.6 1039.2,689.0 1043.3,671.2 1047.3,657.5 1051.4,652.1 1055.4,664.3 1059.5,674.1 1063.6,683.7 1067.6,690.6 1071.7,698.8 1075.7,700.4 1079.8,699.6 1083.8,697.1 1087.9,701.5 1091.9,698.4 1096.0,701.4 1100.0,685.8 1104.1,677.1 1108.2,668.3 1112.2,664.9 1116.3,666.3 1120.3,671.8 1124.4,684.7 1128.4,694.3 1132.5,697.0 1136.5,699.2 1140.6,697.8 1144.7,698.8 1148.7,699.2 1152.8,695.6 1156.8,695.1 1160.9,691.3 1164.9,685.6 1164.9,696.4 5.2,696.4" fill="#4e2626"/>
<g clip-path="url(#ps)">
<polyline points="5.2,663.6 9.3,658.4 13.3,657.3 17.4,671.1 21.4,688.7 25.5,698.0 29.5,684.2 33.6,668.0 37.6,655.3 41.7,660.8 45.8,669.8 49.8,685.7 53.9,692.3 57.9,689.2 62.0,683.2 66.0,669.4 70.1,661.2 74.1,666.3 78.2,667.5 82.2,670.0 86.3,653.1 90.4,652.2 94.4,653.1 98.5,653.1 102.5,652.7 106.6,655.4 110.6,657.2 114.7,663.3 118.7,672.2 122.8,679.2 126.8,679.7 130.9,675.7 135.0,670.8 139.0,670.5 143.1,666.6 147.1,668.2 151.2,677.2 155.2,688.5 159.3,698.7 163.3,695.0 167.4,683.8 171.5,668.1 175.5,657.5 179.6,663.7 183.6,679.0 187.7,692.2 191.7,696.9 195.8,698.1 199.8,698.0 203.9,691.4 207.9,681.6 212.0,674.6 216.1,669.0 220.1,661.8 224.2,655.3 228.2,651.2 232.3,650.0 236.3,649.0 240.4,647.1 244.4,648.4 248.5,655.2 252.6,672.5 256.6,679.5 260.7,679.5 264.7,666.7 268.8,661.7 272.8,658.0 276.9,661.1 280.9,677.7 285.0,691.7 289.0,696.5 293.1,688.2 297.2,676.8 301.2,677.6 305.3,685.0 309.3,692.0 313.4,685.6 317.4,677.6 321.5,683.8 325.5,692.0 329.6,688.8 333.7,676.9 337.7,663.3 341.8,656.3 345.8,650.3 349.9,650.7 353.9,651.3 358.0,651.5 362.0,650.7 366.1,657.8 370.1,656.8 374.2,664.8 378.3,665.2 382.3,672.4 386.4,678.0 390.4,687.0 394.5,689.2 398.5,681.1 402.6,664.7 406.6,656.6 410.7,650.1 414.8,650.0 418.8,652.0 422.9,659.8 426.9,672.9 431.0,685.5 435.0,687.5 439.1,677.6 443.1,667.2 447.2,661.6 451.2,658.1 455.3,654.1 459.4,651.9 463.4,657.9 467.5,663.6 471.5,671.2 475.6,675.1 479.6,669.0 483.7,661.1 487.7,651.1 491.8,650.1 495.9,651.5 499.9,654.9 504.0,663.7 508.0,663.3 512.1,658.8 516.1,650.3 520.2,647.5 524.2,649.8 528.3,649.1 532.4,650.0 536.4,662.9 540.5,677.3 544.5,696.8 548.6,696.9 552.6,698.4 556.7,688.2 560.7,689.7 564.8,693.1 568.8,701.6 572.9,703.7 577.0,700.6 581.0,696.4 585.1,680.7 589.1,667.9 593.2,665.9 597.2,675.9 601.3,692.7 605.3,698.6 609.4,705.7 613.5,696.6 617.5,690.7 621.6,682.3 625.6,686.5 629.7,689.1 633.7,694.9 637.8,696.9 641.8,695.7 645.9,680.0 649.9,662.8 654.0,649.1 658.1,649.1 662.1,649.4 666.2,650.0 670.2,655.8 674.3,676.1 678.3,691.0 682.4,698.4 686.4,691.3 690.5,694.6 694.5,699.6 698.6,698.7 702.7,696.1 706.7,694.8 710.8,702.6 714.8,701.2 718.9,690.3 722.9,674.0 727.0,670.6 731.0,680.2 735.1,691.7 739.2,699.0 743.2,689.7 747.3,677.8 751.3,658.9 755.4,651.8 759.4,655.2 763.5,658.0 767.5,658.4 771.6,652.9 775.6,652.6 779.7,654.6 783.8,660.9 787.8,667.2 791.9,664.0 795.9,656.0 800.0,647.3 804.0,646.5 808.1,646.7 812.1,646.7 816.2,650.0 820.3,659.9 824.3,678.2 828.4,689.2 832.4,697.5 836.5,690.1 840.5,677.2 844.6,668.6 848.6,663.6 852.7,665.1 856.8,659.9 860.8,671.5 864.9,686.9 868.9,691.1 873.0,681.7 877.0,669.4 881.1,673.4 885.1,673.0 889.2,667.2 893.2,655.7 897.3,649.1 901.4,650.2 905.4,651.4 909.5,656.2 913.5,660.6 917.6,666.8 921.6,677.0 925.7,686.1 929.7,680.2 933.8,666.3 937.9,665.0 941.9,667.6 946.0,670.8 950.0,657.5 954.1,657.1 958.1,659.3 962.2,678.2 966.2,678.1 970.3,672.6 974.3,654.5 978.4,662.1 982.5,675.9 986.5,687.8 990.6,692.9 994.6,693.8 998.7,682.9 1002.7,683.5 1006.8,686.6 1010.8,700.3 1014.9,702.3 1018.9,701.6 1023.0,705.3 1027.1,704.9 1031.1,704.3 1035.2,699.6 1039.2,689.0 1043.3,671.2 1047.3,657.5 1051.4,652.1 1055.4,664.3 1059.5,674.1 1063.6,683.7 1067.6,690.6 1071.7,698.8 1075.7,700.4 1079.8,699.6 1083.8,697.1 1087.9,701.5 1091.9,698.4 1096.0,701.4 1100.0,685.8 1104.1,677.1 1108.2,668.3 1112.2,664.9 1116.3,666.3 1120.3,671.8 1124.4,684.7 1128.4,694.3 1132.5,697.0 1136.5,699.2 1140.6,697.8 1144.7,698.8 1148.7,699.2 1152.8,695.6 1156.8,695.1 1160.9,691.3 1164.9,685.6" fill="none" stroke="#76689c" stroke-width="2.1" stroke-linejoin="round"/>
<polyline points="5.2,663.6 9.3,661.0 13.3,659.8 17.4,662.3 21.4,672.4 25.5,685.9 29.5,690.3 33.6,683.4 37.6,669.2 41.7,661.4 45.8,662.0 49.8,672.1 53.9,682.6 57.9,689.1 62.0,688.2 66.0,680.6 70.1,671.3 74.1,665.6 78.2,665.0 82.2,667.9 86.3,663.5 90.4,658.4 94.4,652.8 98.5,652.8 102.5,653.0 106.6,653.7 110.6,655.1 114.7,658.6 118.7,664.2 122.8,671.6 126.8,677.1 130.9,678.2 135.0,675.4 139.0,672.4 143.1,669.3 147.1,668.4 151.2,670.7 155.2,677.9 159.3,688.1 163.3,694.1 167.4,692.5 171.5,682.3 175.5,669.8 179.6,663.1 183.6,666.7 187.7,678.3 191.7,689.3 195.8,695.7 199.8,697.6 203.9,695.8 207.9,690.3 212.0,682.5 216.1,675.1 220.1,668.5 224.2,662.0 228.2,656.1 232.3,652.2 236.3,650.1 240.4,648.7 244.4,648.2 248.5,650.2 252.6,658.7 256.6,669.0 260.7,677.2 264.7,675.2 268.8,669.3 272.8,662.1 276.9,660.3 280.9,665.6 285.0,676.8 289.0,688.6 293.1,692.1 297.2,687.2 301.2,680.8 305.3,679.8 309.3,684.9 313.4,687.5 317.4,685.1 321.5,682.4 325.5,684.5 329.6,688.2 333.7,685.9 337.7,676.3 341.8,665.5 345.8,656.6 349.9,652.4 353.9,650.8 358.0,651.2 362.0,651.2 366.1,653.3 370.1,655.1 374.2,659.8 378.3,662.3 382.3,667.5 386.4,671.9 390.4,679.1 394.5,684.7 398.5,685.8 402.6,678.3 406.6,667.5 410.7,657.1 414.8,652.2 418.8,650.7 422.9,653.9 426.9,661.6 431.0,672.7 435.0,682.0 439.1,683.5 443.1,677.4 447.2,668.8 451.2,662.3 455.3,657.9 459.4,654.7 463.4,654.6 467.5,657.8 471.5,664.2 475.6,670.0 479.6,671.8 483.7,668.4 487.7,660.4 491.8,654.1 495.9,650.9 499.9,652.2 504.0,656.7 508.0,660.6 512.1,662.0 516.1,657.5 520.2,652.2 524.2,649.2 528.3,648.8 532.4,649.7 536.4,654.0 540.5,663.4 544.5,679.0 548.6,690.3 552.6,697.4 556.7,694.5 560.7,692.1 564.8,690.3 568.8,694.8 572.9,699.4 577.0,702.0 581.0,700.3 585.1,692.6 589.1,681.7 593.2,671.5 597.2,669.9 601.3,678.2 605.3,689.1 609.4,699.0 613.5,700.3 617.5,697.7 621.6,689.9 625.6,686.5 629.7,686.0 633.7,690.2 637.8,693.6 641.8,695.8 645.9,690.9 649.9,679.5 654.0,664.0 658.1,653.7 662.1,649.2 666.2,649.5 670.2,651.7 674.3,660.6 678.3,674.3 682.4,688.5 686.4,693.6 690.5,694.8 694.5,695.2 698.6,697.7 702.7,698.2 706.7,696.6 710.8,697.9 714.8,699.5 718.9,698.0 722.9,688.5 727.0,678.3 731.0,675.0 735.1,680.8 739.2,690.3 743.2,693.5 747.3,688.8 751.3,675.5 755.4,662.8 759.4,655.3 763.5,655.0 767.5,657.2 771.6,656.4 775.6,654.6 779.7,653.4 783.8,656.0 787.8,660.9 791.9,664.0 795.9,662.4 800.0,655.8 804.0,649.9 808.1,646.8 812.1,646.6 816.2,647.8 820.3,652.2 824.3,662.7 828.4,675.8 832.4,688.3 836.5,692.2 840.5,688.2 844.6,678.6 848.6,669.8 852.7,665.7 856.8,662.8 860.8,665.5 864.9,672.8 868.9,683.2 873.0,686.5 877.0,680.7 881.1,674.8 885.1,671.9 889.2,671.2 893.2,665.3 897.3,657.3 901.4,651.7 905.4,650.3 909.5,652.6 913.5,656.1 917.6,661.2 921.6,668.1 925.7,676.6 929.7,681.1 933.8,677.5 937.9,670.5 941.9,666.3 946.0,667.8 950.0,665.3 954.1,661.8 958.1,657.9 962.2,664.8 966.2,671.8 970.3,676.3 974.3,668.4 978.4,663.1 982.5,664.2 986.5,675.3 990.6,685.5 994.6,691.5 998.7,689.8 1002.7,686.7 1006.8,684.3 1010.8,690.1 1014.9,696.4 1018.9,701.4 1023.0,703.1 1027.1,703.9 1031.1,704.8 1035.2,702.9 1039.2,697.6 1043.3,686.6 1047.3,672.6 1051.4,660.3 1055.4,658.0 1059.5,663.5 1063.6,674.0 1067.6,682.8 1071.7,691.0 1075.7,696.6 1079.8,699.6 1083.8,699.0 1087.9,699.4 1091.9,699.0 1096.0,700.4 1100.0,695.2 1104.1,688.1 1108.2,677.1 1112.2,670.1 1116.3,666.5 1120.3,667.7 1124.4,674.3 1128.4,683.6 1132.5,692.0 1136.5,696.8 1140.6,698.0 1144.7,698.6 1148.7,698.6 1152.8,697.9 1156.8,696.6 1160.9,694.0 1164.9,690.6" fill="none" stroke="#b24aa6" stroke-width="2.1" stroke-linejoin="round"/>
</g>
<rect x="4.0" y="644.0" width="166.0" height="20.0" fill="#1e1e1e" fill-opacity="0.72"/>
<rect x="4" y="716" width="1442" height="56" fill="#222222"/>
<rect x="1385" y="716" width="1" height="56" fill="#000"/>
<line x1="57.5" y1="716" x2="57.5" y2="772" stroke="#2c2c2c" stroke-width="1"/>
<line x1="159.5" y1="716" x2="159.5" y2="772" stroke="#2c2c2c" stroke-width="1"/>
<line x1="268.5" y1="716" x2="268.5" y2="772" stroke="#2c2c2c" stroke-width="1"/>
<line x1="374.5" y1="716" x2="374.5" y2="772" stroke="#2c2c2c" stroke-width="1"/>
<line x1="479.5" y1="716" x2="479.5" y2="772" stroke="#2c2c2c" stroke-width="1"/>
<line x1="585.5" y1="716" x2="585.5" y2="772" stroke="#2c2c2c" stroke-width="1"/>
<line x1="690.5" y1="716" x2="690.5" y2="772" stroke="#2c2c2c" stroke-width="1"/>
<line x1="796.5" y1="716" x2="796.5" y2="772" stroke="#2c2c2c" stroke-width="1"/>
<line x1="901.5" y1="716" x2="901.5" y2="772" stroke="#2c2c2c" stroke-width="1"/>
<line x1="1007.5" y1="716" x2="1007.5" y2="772" stroke="#2c2c2c" stroke-width="1"/>
<line x1="1112.5" y1="716" x2="1112.5" y2="772" stroke="#2c2c2c" stroke-width="1"/>
<line x1="4" y1="718.0" x2="1385" y2="718.0" stroke="#2e2e2e" stroke-width="1"/>
<line x1="4" y1="770.5" x2="1385" y2="770.5" stroke="#2e2e2e" stroke-width="1"/>
<line x1="4" y1="733.5" x2="1385" y2="733.5" stroke="#5ea82a" stroke-width="1" stroke-dasharray="1,2"/>
<line x1="4" y1="754.5" x2="1385" y2="754.5" stroke="#c03434" stroke-width="1" stroke-dasharray="1,2"/>
<rect x="1386" y="717.5" width="4" height="1" fill="#555"/>
<rect x="1386" y="770.0" width="4" height="1" fill="#555"/>
<defs><clipPath id="fh3"><rect x="4" y="716" width="1381" height="17.2"/></clipPath><clipPath id="fl3"><rect x="4" y="754.2" width="1381" height="17.8"/></clipPath></defs>
<polygon clip-path="url(#fh3)" points="5.2,738.5 9.3,734.4 13.3,737.0 17.4,740.4 21.4,741.5 25.5,741.0 29.5,736.3 33.6,732.3 37.6,730.7 41.7,736.0 45.8,740.0 49.8,743.9 53.9,741.7 57.9,739.2 62.0,743.8 66.0,737.7 70.1,736.5 74.1,748.9 78.2,740.1 82.2,738.0 86.3,734.5 90.4,731.3 94.4,734.6 98.5,732.9 102.5,730.9 106.6,734.0 110.6,732.2 114.7,734.2 118.7,737.0 122.8,736.2 126.8,731.4 130.9,735.9 135.0,733.1 139.0,734.5 143.1,734.2 147.1,735.8 151.2,740.6 155.2,745.4 159.3,744.9 163.3,742.9 167.4,739.2 171.5,736.8 175.5,731.0 179.6,743.9 183.6,745.3 187.7,743.4 191.7,749.0 195.8,752.0 199.8,749.9 203.9,747.5 207.9,745.5 212.0,747.6 216.1,744.4 220.1,739.6 224.2,736.8 228.2,736.0 232.3,734.3 236.3,734.2 240.4,731.1 244.4,730.1 248.5,729.6 252.6,741.4 256.6,735.4 260.7,734.6 264.7,733.2 268.8,733.5 272.8,732.8 276.9,731.9 280.9,754.8 285.0,751.0 289.0,745.5 293.1,744.9 297.2,741.0 301.2,748.3 305.3,750.4 309.3,746.7 313.4,743.3 317.4,745.9 321.5,751.1 325.5,749.2 329.6,744.9 333.7,744.3 337.7,741.5 341.8,738.7 345.8,738.5 349.9,738.1 353.9,737.9 358.0,736.5 362.0,734.1 366.1,738.1 370.1,734.8 374.2,740.3 378.3,739.4 382.3,738.8 386.4,742.7 390.4,746.0 394.5,741.7 398.5,740.1 402.6,734.3 406.6,732.4 410.7,731.8 414.8,728.2 418.8,724.5 422.9,731.7 426.9,739.4 431.0,741.1 435.0,736.3 439.1,735.0 443.1,738.1 447.2,733.3 451.2,729.2 455.3,728.2 459.4,729.4 463.4,736.8 467.5,734.6 471.5,735.1 475.6,736.3 479.6,730.5 483.7,727.2 487.7,726.9 491.8,726.4 495.9,729.7 499.9,729.3 504.0,729.0 508.0,725.8 512.1,722.8 516.1,721.8 520.2,721.3 524.2,726.2 528.3,725.0 532.4,723.2 536.4,735.5 540.5,734.7 544.5,745.0 548.6,741.6 552.6,741.8 556.7,740.4 560.7,744.4 564.8,748.3 568.8,748.7 572.9,750.6 577.0,747.7 581.0,749.3 585.1,746.0 589.1,741.2 593.2,746.9 597.2,747.4 601.3,749.3 605.3,752.5 609.4,757.5 613.5,750.1 617.5,751.7 621.6,751.8 625.6,754.3 629.7,754.8 633.7,756.3 637.8,756.3 641.8,753.9 645.9,743.4 649.9,737.8 654.0,736.6 658.1,736.6 662.1,731.1 666.2,731.4 670.2,737.2 674.3,746.5 678.3,743.9 682.4,743.6 686.4,742.3 690.5,751.1 694.5,754.1 698.6,747.8 702.7,749.8 706.7,753.7 710.8,754.6 714.8,750.8 718.9,746.7 722.9,746.1 727.0,749.7 731.0,752.0 735.1,750.7 739.2,752.0 743.2,746.1 747.3,744.5 751.3,739.1 755.4,738.7 759.4,743.5 763.5,740.0 767.5,734.8 771.6,732.6 775.6,734.0 779.7,734.8 783.8,737.8 787.8,739.3 791.9,734.2 795.9,732.5 800.0,731.9 804.0,728.6 808.1,727.8 812.1,727.3 816.2,729.4 820.3,735.2 824.3,739.3 828.4,737.8 832.4,743.1 836.5,739.7 840.5,736.3 844.6,741.5 848.6,739.8 852.7,738.0 856.8,736.2 860.8,745.9 864.9,750.4 868.9,743.3 873.0,743.3 877.0,742.1 881.1,747.7 885.1,743.9 889.2,739.1 893.2,737.9 897.3,737.2 901.4,733.4 905.4,732.5 909.5,734.8 913.5,734.0 917.6,736.5 921.6,740.1 925.7,739.1 929.7,735.5 933.8,734.3 937.9,742.6 941.9,737.7 946.0,738.5 950.0,733.4 954.1,735.9 958.1,738.2 962.2,743.9 966.2,736.0 970.3,735.3 974.3,729.6 978.4,741.2 982.5,743.9 986.5,740.3 990.6,743.4 994.6,743.7 998.7,737.8 1002.7,745.0 1006.8,748.5 1010.8,746.5 1014.9,750.4 1018.9,754.5 1023.0,755.0 1027.1,755.4 1031.1,755.9 1035.2,752.3 1039.2,753.2 1043.3,746.6 1047.3,744.3 1051.4,745.4 1055.4,748.4 1059.5,746.0 1063.6,744.4 1067.6,748.4 1071.7,751.4 1075.7,749.4 1079.8,753.3 1083.8,750.8 1087.9,752.5 1091.9,751.5 1096.0,752.8 1100.0,747.2 1104.1,748.4 1108.2,749.4 1112.2,740.7 1116.3,745.1 1120.3,747.6 1124.4,745.8 1128.4,754.1 1132.5,757.1 1136.5,753.1 1140.6,754.2 1144.7,757.5 1148.7,757.3 1152.8,755.2 1156.8,759.0 1160.9,752.5 1164.9,751.1 1164.9,733.2 5.2,733.2" fill="#34502a"/>
<polygon clip-path="url(#fl3)" points="5.2,738.5 9.3,734.4 13.3,737.0 17.4,740.4 21.4,741.5 25.5,741.0 29.5,736.3 33.6,732.3 37.6,730.7 41.7,736.0 45.8,740.0 49.8,743.9 53.9,741.7 57.9,739.2 62.0,743.8 66.0,737.7 70.1,736.5 74.1,748.9 78.2,740.1 82.2,738.0 86.3,734.5 90.4,731.3 94.4,734.6 98.5,732.9 102.5,730.9 106.6,734.0 110.6,732.2 114.7,734.2 118.7,737.0 122.8,736.2 126.8,731.4 130.9,735.9 135.0,733.1 139.0,734.5 143.1,734.2 147.1,735.8 151.2,740.6 155.2,745.4 159.3,744.9 163.3,742.9 167.4,739.2 171.5,736.8 175.5,731.0 179.6,743.9 183.6,745.3 187.7,743.4 191.7,749.0 195.8,752.0 199.8,749.9 203.9,747.5 207.9,745.5 212.0,747.6 216.1,744.4 220.1,739.6 224.2,736.8 228.2,736.0 232.3,734.3 236.3,734.2 240.4,731.1 244.4,730.1 248.5,729.6 252.6,741.4 256.6,735.4 260.7,734.6 264.7,733.2 268.8,733.5 272.8,732.8 276.9,731.9 280.9,754.8 285.0,751.0 289.0,745.5 293.1,744.9 297.2,741.0 301.2,748.3 305.3,750.4 309.3,746.7 313.4,743.3 317.4,745.9 321.5,751.1 325.5,749.2 329.6,744.9 333.7,744.3 337.7,741.5 341.8,738.7 345.8,738.5 349.9,738.1 353.9,737.9 358.0,736.5 362.0,734.1 366.1,738.1 370.1,734.8 374.2,740.3 378.3,739.4 382.3,738.8 386.4,742.7 390.4,746.0 394.5,741.7 398.5,740.1 402.6,734.3 406.6,732.4 410.7,731.8 414.8,728.2 418.8,724.5 422.9,731.7 426.9,739.4 431.0,741.1 435.0,736.3 439.1,735.0 443.1,738.1 447.2,733.3 451.2,729.2 455.3,728.2 459.4,729.4 463.4,736.8 467.5,734.6 471.5,735.1 475.6,736.3 479.6,730.5 483.7,727.2 487.7,726.9 491.8,726.4 495.9,729.7 499.9,729.3 504.0,729.0 508.0,725.8 512.1,722.8 516.1,721.8 520.2,721.3 524.2,726.2 528.3,725.0 532.4,723.2 536.4,735.5 540.5,734.7 544.5,745.0 548.6,741.6 552.6,741.8 556.7,740.4 560.7,744.4 564.8,748.3 568.8,748.7 572.9,750.6 577.0,747.7 581.0,749.3 585.1,746.0 589.1,741.2 593.2,746.9 597.2,747.4 601.3,749.3 605.3,752.5 609.4,757.5 613.5,750.1 617.5,751.7 621.6,751.8 625.6,754.3 629.7,754.8 633.7,756.3 637.8,756.3 641.8,753.9 645.9,743.4 649.9,737.8 654.0,736.6 658.1,736.6 662.1,731.1 666.2,731.4 670.2,737.2 674.3,746.5 678.3,743.9 682.4,743.6 686.4,742.3 690.5,751.1 694.5,754.1 698.6,747.8 702.7,749.8 706.7,753.7 710.8,754.6 714.8,750.8 718.9,746.7 722.9,746.1 727.0,749.7 731.0,752.0 735.1,750.7 739.2,752.0 743.2,746.1 747.3,744.5 751.3,739.1 755.4,738.7 759.4,743.5 763.5,740.0 767.5,734.8 771.6,732.6 775.6,734.0 779.7,734.8 783.8,737.8 787.8,739.3 791.9,734.2 795.9,732.5 800.0,731.9 804.0,728.6 808.1,727.8 812.1,727.3 816.2,729.4 820.3,735.2 824.3,739.3 828.4,737.8 832.4,743.1 836.5,739.7 840.5,736.3 844.6,741.5 848.6,739.8 852.7,738.0 856.8,736.2 860.8,745.9 864.9,750.4 868.9,743.3 873.0,743.3 877.0,742.1 881.1,747.7 885.1,743.9 889.2,739.1 893.2,737.9 897.3,737.2 901.4,733.4 905.4,732.5 909.5,734.8 913.5,734.0 917.6,736.5 921.6,740.1 925.7,739.1 929.7,735.5 933.8,734.3 937.9,742.6 941.9,737.7 946.0,738.5 950.0,733.4 954.1,735.9 958.1,738.2 962.2,743.9 966.2,736.0 970.3,735.3 974.3,729.6 978.4,741.2 982.5,743.9 986.5,740.3 990.6,743.4 994.6,743.7 998.7,737.8 1002.7,745.0 1006.8,748.5 1010.8,746.5 1014.9,750.4 1018.9,754.5 1023.0,755.0 1027.1,755.4 1031.1,755.9 1035.2,752.3 1039.2,753.2 1043.3,746.6 1047.3,744.3 1051.4,745.4 1055.4,748.4 1059.5,746.0 1063.6,744.4 1067.6,748.4 1071.7,751.4 1075.7,749.4 1079.8,753.3 1083.8,750.8 1087.9,752.5 1091.9,751.5 1096.0,752.8 1100.0,747.2 1104.1,748.4 1108.2,749.4 1112.2,740.7 1116.3,745.1 1120.3,747.6 1124.4,745.8 1128.4,754.1 1132.5,757.1 1136.5,753.1 1140.6,754.2 1144.7,757.5 1148.7,757.3 1152.8,755.2 1156.8,759.0 1160.9,752.5 1164.9,751.1 1164.9,754.2 5.2,754.2" fill="#4e2626"/>
<g clip-path="url(#pr)">
<polyline points="5.2,738.5 9.3,734.4 13.3,737.0 17.4,740.4 21.4,741.5 25.5,741.0 29.5,736.3 33.6,732.3 37.6,730.7 41.7,736.0 45.8,740.0 49.8,743.9 53.9,741.7 57.9,739.2 62.0,743.8 66.0,737.7 70.1,736.5 74.1,748.9 78.2,740.1 82.2,738.0 86.3,734.5 90.4,731.3 94.4,734.6 98.5,732.9 102.5,730.9 106.6,734.0 110.6,732.2 114.7,734.2 118.7,737.0 122.8,736.2 126.8,731.4 130.9,735.9 135.0,733.1 139.0,734.5 143.1,734.2 147.1,735.8 151.2,740.6 155.2,745.4 159.3,744.9 163.3,742.9 167.4,739.2 171.5,736.8 175.5,731.0 179.6,743.9 183.6,745.3 187.7,743.4 191.7,749.0 195.8,752.0 199.8,749.9 203.9,747.5 207.9,745.5 212.0,747.6 216.1,744.4 220.1,739.6 224.2,736.8 228.2,736.0 232.3,734.3 236.3,734.2 240.4,731.1 244.4,730.1 248.5,729.6 252.6,741.4 256.6,735.4 260.7,734.6 264.7,733.2 268.8,733.5 272.8,732.8 276.9,731.9 280.9,754.8 285.0,751.0 289.0,745.5 293.1,744.9 297.2,741.0 301.2,748.3 305.3,750.4 309.3,746.7 313.4,743.3 317.4,745.9 321.5,751.1 325.5,749.2 329.6,744.9 333.7,744.3 337.7,741.5 341.8,738.7 345.8,738.5 349.9,738.1 353.9,737.9 358.0,736.5 362.0,734.1 366.1,738.1 370.1,734.8 374.2,740.3 378.3,739.4 382.3,738.8 386.4,742.7 390.4,746.0 394.5,741.7 398.5,740.1 402.6,734.3 406.6,732.4 410.7,731.8 414.8,728.2 418.8,724.5 422.9,731.7 426.9,739.4 431.0,741.1 435.0,736.3 439.1,735.0 443.1,738.1 447.2,733.3 451.2,729.2 455.3,728.2 459.4,729.4 463.4,736.8 467.5,734.6 471.5,735.1 475.6,736.3 479.6,730.5 483.7,727.2 487.7,726.9 491.8,726.4 495.9,729.7 499.9,729.3 504.0,729.0 508.0,725.8 512.1,722.8 516.1,721.8 520.2,721.3 524.2,726.2 528.3,725.0 532.4,723.2 536.4,735.5 540.5,734.7 544.5,745.0 548.6,741.6 552.6,741.8 556.7,740.4 560.7,744.4 564.8,748.3 568.8,748.7 572.9,750.6 577.0,747.7 581.0,749.3 585.1,746.0 589.1,741.2 593.2,746.9 597.2,747.4 601.3,749.3 605.3,752.5 609.4,757.5 613.5,750.1 617.5,751.7 621.6,751.8 625.6,754.3 629.7,754.8 633.7,756.3 637.8,756.3 641.8,753.9 645.9,743.4 649.9,737.8 654.0,736.6 658.1,736.6 662.1,731.1 666.2,731.4 670.2,737.2 674.3,746.5 678.3,743.9 682.4,743.6 686.4,742.3 690.5,751.1 694.5,754.1 698.6,747.8 702.7,749.8 706.7,753.7 710.8,754.6 714.8,750.8 718.9,746.7 722.9,746.1 727.0,749.7 731.0,752.0 735.1,750.7 739.2,752.0 743.2,746.1 747.3,744.5 751.3,739.1 755.4,738.7 759.4,743.5 763.5,740.0 767.5,734.8 771.6,732.6 775.6,734.0 779.7,734.8 783.8,737.8 787.8,739.3 791.9,734.2 795.9,732.5 800.0,731.9 804.0,728.6 808.1,727.8 812.1,727.3 816.2,729.4 820.3,735.2 824.3,739.3 828.4,737.8 832.4,743.1 836.5,739.7 840.5,736.3 844.6,741.5 848.6,739.8 852.7,738.0 856.8,736.2 860.8,745.9 864.9,750.4 868.9,743.3 873.0,743.3 877.0,742.1 881.1,747.7 885.1,743.9 889.2,739.1 893.2,737.9 897.3,737.2 901.4,733.4 905.4,732.5 909.5,734.8 913.5,734.0 917.6,736.5 921.6,740.1 925.7,739.1 929.7,735.5 933.8,734.3 937.9,742.6 941.9,737.7 946.0,738.5 950.0,733.4 954.1,735.9 958.1,738.2 962.2,743.9 966.2,736.0 970.3,735.3 974.3,729.6 978.4,741.2 982.5,743.9 986.5,740.3 990.6,743.4 994.6,743.7 998.7,737.8 1002.7,745.0 1006.8,748.5 1010.8,746.5 1014.9,750.4 1018.9,754.5 1023.0,755.0 1027.1,755.4 1031.1,755.9 1035.2,752.3 1039.2,753.2 1043.3,746.6 1047.3,744.3 1051.4,745.4 1055.4,748.4 1059.5,746.0 1063.6,744.4 1067.6,748.4 1071.7,751.4 1075.7,749.4 1079.8,753.3 1083.8,750.8 1087.9,752.5 1091.9,751.5 1096.0,752.8 1100.0,747.2 1104.1,748.4 1108.2,749.4 1112.2,740.7 1116.3,745.1 1120.3,747.6 1124.4,745.8 1128.4,754.1 1132.5,757.1 1136.5,753.1 1140.6,754.2 1144.7,757.5 1148.7,757.3 1152.8,755.2 1156.8,759.0 1160.9,752.5 1164.9,751.1" fill="none" stroke="#668a4a" stroke-width="2.1" stroke-linejoin="round"/>
</g>
<rect x="4.0" y="719.0" width="89.0" height="20.0" fill="#1e1e1e" fill-opacity="0.72"/>
<rect x="4" y="775" width="1442" height="50" fill="#222222"/>
<rect x="1385" y="775" width="1" height="50" fill="#000"/>
<line x1="57.5" y1="775" x2="57.5" y2="825" stroke="#2c2c2c" stroke-width="1"/>
<line x1="159.5" y1="775" x2="159.5" y2="825" stroke="#2c2c2c" stroke-width="1"/>
<line x1="268.5" y1="775" x2="268.5" y2="825" stroke="#2c2c2c" stroke-width="1"/>
<line x1="374.5" y1="775" x2="374.5" y2="825" stroke="#2c2c2c" stroke-width="1"/>
<line x1="479.5" y1="775" x2="479.5" y2="825" stroke="#2c2c2c" stroke-width="1"/>
<line x1="585.5" y1="775" x2="585.5" y2="825" stroke="#2c2c2c" stroke-width="1"/>
<line x1="690.5" y1="775" x2="690.5" y2="825" stroke="#2c2c2c" stroke-width="1"/>
<line x1="796.5" y1="775" x2="796.5" y2="825" stroke="#2c2c2c" stroke-width="1"/>
<line x1="901.5" y1="775" x2="901.5" y2="825" stroke="#2c2c2c" stroke-width="1"/>
<line x1="1007.5" y1="775" x2="1007.5" y2="825" stroke="#2c2c2c" stroke-width="1"/>
<line x1="1112.5" y1="775" x2="1112.5" y2="825" stroke="#2c2c2c" stroke-width="1"/>
<line x1="4" y1="807.3" x2="1385" y2="807.3" stroke="#2e2e2e" stroke-width="1"/>
<rect x="1386" y="806.8" width="4" height="1" fill="#555"/>
<g clip-path="url(#pm)">
<path d="M3.9 805.5h2.6v2.5h-2.6zM8.0 805.5h2.6v2.5h-2.6zM12.0 805.5h2.6v2.5h-2.6zM16.1 805.5h2.6v2.5h-2.6zM20.1 805.5h2.6v2.5h-2.6zM24.2 805.5h2.6v2.5h-2.6zM28.2 805.5h2.6v2.5h-2.6zM32.3 805.5h2.6v2.5h-2.6zM36.3 805.5h2.6v2.5h-2.6zM40.4 805.5h2.6v2.5h-2.6zM44.5 805.5h2.6v2.5h-2.6zM48.5 805.5h2.6v2.5h-2.6zM52.6 805.5h2.6v2.5h-2.6zM56.6 805.5h2.6v2.5h-2.6zM60.7 805.5h2.6v2.5h-2.6zM64.7 805.5h2.6v2.5h-2.6zM68.8 805.5h2.6v2.5h-2.6zM72.8 805.5h2.6v2.5h-2.6zM76.9 805.5h2.6v2.5h-2.6zM80.9 805.5h2.6v2.5h-2.6zM85.0 805.5h2.6v2.5h-2.6zM89.1 805.5h2.6v2.5h-2.6zM93.1 805.5h2.6v2.5h-2.6zM97.2 805.5h2.6v2.5h-2.6zM101.2 805.5h2.6v2.5h-2.6zM105.3 805.5h2.6v2.5h-2.6zM109.3 805.5h2.6v2.5h-2.6zM113.4 805.5h2.6v2.5h-2.6zM117.4 805.5h2.6v2.5h-2.6zM121.5 805.5h2.6v2.5h-2.6zM125.5 805.5h2.6v2.5h-2.6zM129.6 805.5h2.6v2.5h-2.6zM133.7 805.5h2.6v2.5h-2.6zM137.7 805.5h2.6v2.5h-2.6zM141.8 805.5h2.6v2.5h-2.6zM145.8 805.5h2.6v2.5h-2.6zM149.9 805.5h2.6v2.5h-2.6zM153.9 805.5h2.6v2.5h-2.6zM158.0 805.5h2.6v2.5h-2.6zM162.0 805.5h2.6v2.5h-2.6zM166.1 805.5h2.6v2.5h-2.6zM170.2 805.5h2.6v2.5h-2.6zM174.2 805.5h2.6v2.5h-2.6zM178.3 805.5h2.6v2.5h-2.6zM182.3 805.5h2.6v2.5h-2.6zM186.4 805.5h2.6v2.5h-2.6zM190.4 805.5h2.6v2.5h-2.6zM194.5 805.5h2.6v2.5h-2.6zM198.5 806.8h2.6v2.6h-2.6zM202.6 805.5h2.6v2.5h-2.6zM206.6 805.5h2.6v2.5h-2.6zM210.7 805.5h2.6v2.5h-2.6zM214.8 805.5h2.6v2.5h-2.6zM218.8 805.5h2.6v2.5h-2.6zM222.9 805.5h2.6v2.5h-2.6zM226.9 805.5h2.6v2.5h-2.6zM231.0 805.5h2.6v2.5h-2.6zM235.0 805.5h2.6v2.5h-2.6zM239.1 805.5h2.6v2.5h-2.6zM243.1 805.5h2.6v2.5h-2.6zM247.2 805.5h2.6v2.5h-2.6zM251.3 805.5h2.6v2.5h-2.6zM255.3 805.5h2.6v2.5h-2.6zM259.4 805.5h2.6v2.5h-2.6zM263.4 805.5h2.6v2.5h-2.6zM267.5 805.5h2.6v2.5h-2.6zM271.5 805.5h2.6v2.5h-2.6zM275.6 805.5h2.6v2.5h-2.6zM279.6 805.5h2.6v2.5h-2.6zM283.7 805.5h2.6v2.5h-2.6zM287.7 805.5h2.6v2.5h-2.6zM291.8 805.5h2.6v2.5h-2.6zM295.9 805.5h2.6v2.5h-2.6zM299.9 805.5h2.6v2.5h-2.6zM304.0 805.5h2.6v2.5h-2.6zM308.0 805.5h2.6v2.5h-2.6zM312.1 805.5h2.6v2.5h-2.6zM316.1 805.5h2.6v2.5h-2.6zM320.2 805.5h2.6v2.5h-2.6zM324.2 805.5h2.6v2.5h-2.6zM328.3 805.5h2.6v2.5h-2.6zM332.4 805.5h2.6v2.5h-2.6zM336.4 805.5h2.6v2.5h-2.6zM340.5 805.5h2.6v2.5h-2.6zM344.5 805.5h2.6v2.5h-2.6zM348.6 805.5h2.6v2.5h-2.6zM352.6 805.5h2.6v2.5h-2.6zM356.7 805.5h2.6v2.5h-2.6zM360.7 805.5h2.6v2.5h-2.6zM364.8 805.5h2.6v2.5h-2.6zM368.8 805.5h2.6v2.5h-2.6zM372.9 805.5h2.6v2.5h-2.6zM377.0 805.5h2.6v2.5h-2.6zM381.0 805.5h2.6v2.5h-2.6zM385.1 805.5h2.6v2.5h-2.6zM389.1 805.5h2.6v2.5h-2.6zM393.2 805.5h2.6v2.5h-2.6zM397.2 805.5h2.6v2.5h-2.6zM401.3 805.5h2.6v2.5h-2.6zM405.3 805.5h2.6v2.5h-2.6zM409.4 805.5h2.6v2.5h-2.6zM413.5 805.5h2.6v2.5h-2.6zM417.5 804.2h2.6v2.6h-2.6zM421.6 804.1h2.6v2.7h-2.6zM425.6 805.5h2.6v2.5h-2.6zM429.7 805.5h2.6v2.5h-2.6zM433.7 805.5h2.6v2.5h-2.6zM437.8 805.5h2.6v2.5h-2.6zM441.8 805.5h2.6v2.5h-2.6zM445.9 805.5h2.6v2.5h-2.6zM449.9 805.5h2.6v2.5h-2.6zM454.0 803.8h2.6v3.0h-2.6zM458.1 803.7h2.6v3.1h-2.6zM462.1 805.5h2.6v2.5h-2.6zM466.2 805.5h2.6v2.5h-2.6zM470.2 805.5h2.6v2.5h-2.6zM474.3 805.5h2.6v2.5h-2.6zM478.3 805.5h2.6v2.5h-2.6zM482.4 804.3h2.6v2.5h-2.6zM486.4 803.8h2.6v3.0h-2.6zM490.5 803.6h2.6v3.2h-2.6zM494.6 803.9h2.6v2.9h-2.6zM498.6 805.5h2.6v2.5h-2.6zM502.7 805.5h2.6v2.5h-2.6zM506.7 805.5h2.6v2.5h-2.6zM510.8 803.3h2.6v3.5h-2.6zM514.8 802.1h2.6v4.7h-2.6zM518.9 801.2h2.6v5.6h-2.6zM522.9 801.5h2.6v5.3h-2.6zM527.0 801.6h2.6v5.2h-2.6zM531.1 801.1h2.6v5.7h-2.6zM535.1 802.7h2.6v4.1h-2.6zM539.2 803.9h2.6v2.9h-2.6zM543.2 805.5h2.6v2.5h-2.6zM547.3 805.5h2.6v2.5h-2.6zM551.3 805.5h2.6v2.5h-2.6zM555.4 806.8h2.6v2.8h-2.6zM559.4 806.8h2.6v3.9h-2.6zM563.5 806.8h2.6v5.3h-2.6zM567.5 806.8h2.6v6.2h-2.6zM571.6 806.8h2.6v7.0h-2.6zM575.7 806.8h2.6v7.0h-2.6zM579.7 806.8h2.6v7.0h-2.6zM583.8 806.8h2.6v6.4h-2.6zM587.8 806.8h2.6v5.0h-2.6zM591.9 806.8h2.6v4.9h-2.6zM595.9 806.8h2.6v4.8h-2.6zM600.0 806.8h2.6v4.9h-2.6zM604.0 806.8h2.6v5.4h-2.6zM608.1 806.8h2.6v6.9h-2.6zM612.2 806.8h2.6v6.5h-2.6zM616.2 806.8h2.6v6.4h-2.6zM620.3 806.8h2.6v6.0h-2.6zM624.3 806.8h2.6v6.0h-2.6zM628.4 806.8h2.6v5.9h-2.6zM632.4 806.8h2.6v5.9h-2.6zM636.5 806.8h2.6v5.5h-2.6zM640.5 806.8h2.6v4.7h-2.6zM644.6 806.8h2.6v2.7h-2.6zM648.6 805.5h2.6v2.5h-2.6zM652.7 805.5h2.6v2.5h-2.6zM656.8 804.2h2.6v2.6h-2.6zM660.8 802.2h2.6v4.6h-2.6zM664.9 801.2h2.6v5.6h-2.6zM668.9 801.5h2.6v5.3h-2.6zM673.0 803.3h2.6v3.5h-2.6zM677.0 804.1h2.6v2.7h-2.6zM681.1 805.5h2.6v2.5h-2.6zM685.1 805.5h2.6v2.5h-2.6zM689.2 805.5h2.6v2.5h-2.6zM693.2 805.5h2.6v2.5h-2.6zM697.3 805.5h2.6v2.5h-2.6zM701.4 806.8h2.6v2.7h-2.6zM705.4 806.8h2.6v3.9h-2.6zM709.5 806.8h2.6v4.7h-2.6zM713.5 806.8h2.6v4.4h-2.6zM717.6 806.8h2.6v3.3h-2.6zM721.6 805.5h2.6v2.5h-2.6zM725.7 805.5h2.6v2.5h-2.6zM729.7 805.5h2.6v2.5h-2.6zM733.8 805.5h2.6v2.5h-2.6zM737.9 805.5h2.6v2.5h-2.6zM741.9 805.5h2.6v2.5h-2.6zM746.0 805.5h2.6v2.5h-2.6zM750.0 805.5h2.6v2.5h-2.6zM754.1 805.5h2.6v2.5h-2.6zM758.1 805.5h2.6v2.5h-2.6zM762.2 804.0h2.6v2.8h-2.6zM766.2 802.7h2.6v4.1h-2.6zM770.3 801.5h2.6v5.3h-2.6zM774.4 801.1h2.6v5.7h-2.6zM778.4 801.2h2.6v5.6h-2.6zM782.5 801.8h2.6v5.0h-2.6zM786.5 802.6h2.6v4.2h-2.6zM790.6 802.5h2.6v4.3h-2.6zM794.6 802.3h2.6v4.5h-2.6zM798.7 802.3h2.6v4.5h-2.6zM802.7 801.7h2.6v5.1h-2.6zM806.8 801.4h2.6v5.4h-2.6zM810.8 801.4h2.6v5.4h-2.6zM814.9 801.9h2.6v4.9h-2.6zM819.0 803.0h2.6v3.8h-2.6zM823.0 804.3h2.6v2.5h-2.6zM827.1 805.5h2.6v2.5h-2.6zM831.1 805.5h2.6v2.5h-2.6zM835.2 805.5h2.6v2.5h-2.6zM839.2 805.5h2.6v2.5h-2.6zM843.3 805.5h2.6v2.5h-2.6zM847.3 805.5h2.6v2.5h-2.6zM851.4 805.5h2.6v2.5h-2.6zM855.5 805.5h2.6v2.5h-2.6zM859.5 805.5h2.6v2.5h-2.6zM863.6 806.8h2.6v2.6h-2.6zM867.6 805.5h2.6v2.5h-2.6zM871.7 805.5h2.6v2.5h-2.6zM875.7 805.5h2.6v2.5h-2.6zM879.8 806.8h2.6v2.5h-2.6zM883.8 805.5h2.6v2.5h-2.6zM887.9 805.5h2.6v2.5h-2.6zM891.9 805.5h2.6v2.5h-2.6zM896.0 805.5h2.6v2.5h-2.6zM900.1 805.5h2.6v2.5h-2.6zM904.1 805.5h2.6v2.5h-2.6zM908.2 805.5h2.6v2.5h-2.6zM912.2 805.5h2.6v2.5h-2.6zM916.3 805.5h2.6v2.5h-2.6zM920.3 805.5h2.6v2.5h-2.6zM924.4 805.5h2.6v2.5h-2.6zM928.4 805.5h2.6v2.5h-2.6zM932.5 805.5h2.6v2.5h-2.6zM936.6 805.5h2.6v2.5h-2.6zM940.6 805.5h2.6v2.5h-2.6zM944.7 805.5h2.6v2.5h-2.6zM948.7 805.5h2.6v2.5h-2.6zM952.8 805.5h2.6v2.5h-2.6zM956.8 805.5h2.6v2.5h-2.6zM960.9 805.5h2.6v2.5h-2.6zM964.9 805.5h2.6v2.5h-2.6zM969.0 805.5h2.6v2.5h-2.6zM973.0 805.5h2.6v2.5h-2.6zM977.1 805.5h2.6v2.5h-2.6zM981.2 805.5h2.6v2.5h-2.6zM985.2 805.5h2.6v2.5h-2.6zM989.3 805.5h2.6v2.5h-2.6zM993.3 805.5h2.6v2.5h-2.6zM997.4 805.5h2.6v2.5h-2.6zM1001.4 805.5h2.6v2.5h-2.6zM1005.5 805.5h2.6v2.5h-2.6zM1009.5 806.8h2.6v2.8h-2.6zM1013.6 806.8h2.6v3.8h-2.6zM1017.6 806.8h2.6v5.6h-2.6zM1021.7 806.8h2.6v6.5h-2.6zM1025.8 806.8h2.6v7.0h-2.6zM1029.8 806.8h2.6v7.1h-2.6zM1033.9 806.8h2.6v6.3h-2.6zM1037.9 806.8h2.6v5.7h-2.6zM1042.0 806.8h2.6v4.3h-2.6zM1046.0 806.8h2.6v2.8h-2.6zM1050.1 805.5h2.6v2.5h-2.6zM1054.1 805.5h2.6v2.5h-2.6zM1058.2 805.5h2.6v2.5h-2.6zM1062.3 805.5h2.6v2.5h-2.6zM1066.3 805.5h2.6v2.5h-2.6zM1070.4 805.5h2.6v2.5h-2.6zM1074.4 805.5h2.6v2.5h-2.6zM1078.5 805.5h2.6v2.5h-2.6zM1082.5 805.5h2.6v2.5h-2.6zM1086.6 805.5h2.6v2.5h-2.6zM1090.6 805.5h2.6v2.5h-2.6zM1094.7 805.5h2.6v2.5h-2.6zM1098.8 805.5h2.6v2.5h-2.6zM1102.8 805.5h2.6v2.5h-2.6zM1106.9 805.5h2.6v2.5h-2.6zM1110.9 805.5h2.6v2.5h-2.6zM1115.0 805.5h2.6v2.5h-2.6zM1119.0 805.5h2.6v2.5h-2.6zM1123.1 805.5h2.6v2.5h-2.6zM1127.1 805.5h2.6v2.5h-2.6zM1131.2 805.5h2.6v2.5h-2.6zM1135.2 805.5h2.6v2.5h-2.6zM1139.3 805.5h2.6v2.5h-2.6zM1143.4 806.8h2.6v2.6h-2.6zM1147.4 806.8h2.6v2.8h-2.6zM1151.5 806.8h2.6v2.6h-2.6zM1155.5 806.8h2.6v3.1h-2.6zM1159.6 806.8h2.6v2.6h-2.6zM1163.6 805.5h2.6v2.5h-2.6z" fill="#6e6028" stroke="#807030" stroke-width="0.5"/>
<polyline points="5.2,798.3 9.3,798.5 13.3,799.0 17.4,799.6 21.4,800.2 25.5,800.7 29.5,800.9 33.6,800.7 37.6,800.5 41.7,800.6 45.8,800.9 49.8,801.5 53.9,801.9 57.9,802.1 62.0,802.5 66.0,802.5 70.1,802.4 74.1,803.3 78.2,803.2 82.2,802.9 86.3,802.2 90.4,801.1 94.4,800.5 98.5,799.9 102.5,799.1 106.6,798.7 110.6,798.3 114.7,798.1 118.7,798.3 122.8,798.5 126.8,798.0 130.9,798.0 135.0,797.8 139.0,797.7 143.1,797.8 147.1,798.0 151.2,798.6 155.2,799.4 159.3,800.2 163.3,800.7 167.4,800.9 171.5,801.0 175.5,800.4 179.6,801.0 183.6,801.6 187.7,802.1 191.7,803.0 195.8,804.3 199.8,805.1 203.9,805.6 207.9,805.8 212.0,806.2 216.1,806.3 220.1,805.9 224.2,805.3 228.2,804.8 232.3,804.2 236.3,803.7 240.4,803.0 244.4,802.4 248.5,801.9 252.6,802.2 256.6,801.8 260.7,801.5 264.7,801.1 268.8,800.9 272.8,800.7 276.9,800.5 280.9,802.6 285.0,804.0 289.0,804.5 293.1,804.8 297.2,804.6 301.2,805.5 305.3,806.5 309.3,806.9 313.4,806.8 317.4,807.1 321.5,808.1 325.5,808.8 329.6,808.7 333.7,808.6 337.7,808.1 341.8,807.3 345.8,806.7 349.9,806.2 353.9,805.7 358.0,805.2 362.0,804.6 366.1,804.4 370.1,803.9 374.2,803.9 378.3,803.8 382.3,803.8 386.4,804.0 390.4,804.4 394.5,804.5 398.5,804.5 402.6,803.9 406.6,803.3 410.7,802.8 414.8,801.8 418.8,800.1 422.9,799.4 426.9,799.6 431.0,799.9 435.0,799.6 439.1,799.2 443.1,799.3 447.2,798.6 451.2,797.1 455.3,795.6 459.4,794.8 463.4,794.9 467.5,794.7 471.5,794.8 475.6,795.1 479.6,794.2 483.7,792.6 487.7,791.3 491.8,790.3 495.9,790.0 499.9,789.8 504.0,789.8 508.0,789.0 512.1,786.9 516.1,784.5 520.2,782.2 524.2,781.2 528.3,780.0 532.4,778.0 536.4,778.6 540.5,779.1 544.5,782.0 548.6,783.7 552.6,785.3 556.7,786.4 560.7,788.4 564.8,791.2 568.8,793.7 572.9,796.2 577.0,797.9 581.0,799.7 585.1,800.6 589.1,800.6 593.2,801.7 597.2,802.8 601.3,804.1 605.3,805.9 609.4,809.2 613.5,810.4 617.5,811.9 621.6,813.0 625.6,814.6 629.7,815.9 633.7,817.3 637.8,818.3 641.8,818.7 645.9,817.4 649.9,815.1 654.0,812.9 658.1,811.1 662.1,808.0 666.2,805.6 670.2,804.5 674.3,805.4 678.3,805.6 682.4,805.8 686.4,805.6 690.5,807.5 694.5,810.0 698.6,810.7 702.7,811.8 706.7,814.0 710.8,816.0 714.8,816.8 718.9,816.5 722.9,816.1 727.0,816.5 731.0,817.4 735.1,817.8 739.2,818.3 743.2,817.7 747.3,816.8 751.3,814.9 755.4,813.3 759.4,812.6 763.5,811.4 767.5,809.1 771.6,806.6 775.6,804.8 779.7,803.5 783.8,802.9 787.8,802.6 791.9,801.4 795.9,800.1 800.0,799.0 804.0,797.1 808.1,795.4 812.1,794.1 816.2,793.3 820.3,793.5 824.3,794.1 828.4,794.6 832.4,795.7 836.5,796.1 840.5,796.1 844.6,796.7 848.6,797.1 852.7,797.2 856.8,797.1 860.8,798.3 864.9,800.2 868.9,800.7 873.0,801.2 877.0,801.4 881.1,802.5 885.1,802.9 889.2,802.4 893.2,801.8 897.3,801.2 901.4,800.1 905.4,799.0 909.5,798.5 913.5,798.0 917.6,797.9 921.6,798.3 925.7,798.6 929.7,798.4 933.8,798.2 937.9,798.9 941.9,798.8 946.0,798.9 950.0,798.2 954.1,798.0 958.1,798.1 962.2,798.9 966.2,798.4 970.3,798.0 974.3,796.1 978.4,796.5 982.5,797.5 986.5,797.6 990.6,798.4 994.6,799.1 998.7,798.5 1002.7,799.5 1006.8,801.4 1010.8,802.5 1014.9,804.5 1018.9,807.6 1023.0,810.2 1027.1,812.4 1031.1,814.3 1035.2,815.1 1039.2,816.0 1043.3,815.6 1047.3,814.8 1051.4,814.2 1055.4,814.3 1059.5,813.9 1063.6,813.3 1067.6,813.4 1071.7,813.9 1075.7,814.1 1079.8,814.9 1083.8,815.1 1087.9,815.6 1091.9,815.7 1096.0,816.0 1100.0,815.5 1104.1,815.2 1108.2,815.0 1112.2,813.9 1116.3,813.4 1120.3,813.3 1124.4,813.0 1128.4,814.1 1132.5,815.7 1136.5,816.4 1140.6,817.1 1144.7,818.5 1148.7,819.4 1152.8,819.8 1156.8,821.1 1160.9,821.2 1164.9,821.0" fill="none" stroke="#3ee8c4" stroke-width="2.4" stroke-linejoin="round"/>
<polyline points="5.2,800.0 9.3,799.7 13.3,799.6 17.4,799.6 21.4,799.7 25.5,799.9 29.5,800.1 33.6,800.2 37.6,800.3 41.7,800.3 45.8,800.5 49.8,800.7 53.9,800.9 57.9,801.1 62.0,801.4 66.0,801.6 70.1,801.8 74.1,802.1 78.2,802.3 82.2,802.4 86.3,802.4 90.4,802.1 94.4,801.8 98.5,801.4 102.5,800.9 106.6,800.5 110.6,800.1 114.7,799.7 118.7,799.4 122.8,799.2 126.8,799.0 130.9,798.8 135.0,798.6 139.0,798.4 143.1,798.3 147.1,798.2 151.2,798.3 155.2,798.5 159.3,798.9 163.3,799.2 167.4,799.6 171.5,799.8 175.5,800.0 179.6,800.2 183.6,800.5 187.7,800.8 191.7,801.2 195.8,801.8 199.8,802.5 203.9,803.1 207.9,803.7 212.0,804.2 216.1,804.6 220.1,804.9 224.2,804.9 228.2,804.9 232.3,804.8 236.3,804.6 240.4,804.2 244.4,803.9 248.5,803.5 252.6,803.2 256.6,802.9 260.7,802.6 264.7,802.3 268.8,802.0 272.8,801.8 276.9,801.5 280.9,801.7 285.0,802.2 289.0,802.6 293.1,803.1 297.2,803.4 301.2,803.8 305.3,804.3 309.3,804.9 313.4,805.3 317.4,805.6 321.5,806.1 325.5,806.7 329.6,807.1 333.7,807.4 337.7,807.5 341.8,807.5 345.8,807.3 349.9,807.1 353.9,806.8 358.0,806.5 362.0,806.1 366.1,805.8 370.1,805.4 374.2,805.1 378.3,804.8 382.3,804.6 386.4,804.5 390.4,804.5 394.5,804.5 398.5,804.5 402.6,804.4 406.6,804.1 410.7,803.9 414.8,803.5 418.8,802.8 422.9,802.1 426.9,801.6 431.0,801.3 435.0,800.9 439.1,800.6 443.1,800.3 447.2,800.0 451.2,799.4 455.3,798.7 459.4,797.9 463.4,797.3 467.5,796.8 471.5,796.4 475.6,796.1 479.6,795.7 483.7,795.1 487.7,794.3 491.8,793.5 495.9,792.8 499.9,792.2 504.0,791.7 508.0,791.2 512.1,790.3 516.1,789.2 520.2,787.8 524.2,786.4 528.3,785.2 532.4,783.7 536.4,782.7 540.5,782.0 544.5,782.0 548.6,782.3 552.6,782.9 556.7,783.6 560.7,784.6 564.8,785.9 568.8,787.5 572.9,789.2 577.0,791.0 581.0,792.7 585.1,794.3 589.1,795.6 593.2,796.8 597.2,798.0 601.3,799.2 605.3,800.6 609.4,802.3 613.5,803.9 617.5,805.5 621.6,807.0 625.6,808.5 629.7,810.0 633.7,811.4 637.8,812.8 641.8,814.0 645.9,814.7 649.9,814.8 654.0,814.4 658.1,813.7 662.1,812.6 666.2,811.2 670.2,809.9 674.3,809.0 678.3,808.3 682.4,807.8 686.4,807.4 690.5,807.4 694.5,807.9 698.6,808.5 702.7,809.1 706.7,810.1 710.8,811.3 714.8,812.4 718.9,813.2 722.9,813.8 727.0,814.4 731.0,815.0 735.1,815.5 739.2,816.1 743.2,816.4 747.3,816.5 751.3,816.2 755.4,815.6 759.4,815.0 763.5,814.3 767.5,813.3 771.6,811.9 775.6,810.5 779.7,809.1 783.8,807.9 787.8,806.8 791.9,805.7 795.9,804.6 800.0,803.5 804.0,802.2 808.1,800.9 812.1,799.5 816.2,798.3 820.3,797.3 824.3,796.7 828.4,796.3 832.4,796.1 836.5,796.1 840.5,796.1 844.6,796.2 848.6,796.4 852.7,796.6 856.8,796.7 860.8,797.0 864.9,797.7 868.9,798.3 873.0,798.9 877.0,799.4 881.1,800.0 885.1,800.6 889.2,800.9 893.2,801.1 897.3,801.1 901.4,800.9 905.4,800.5 909.5,800.1 913.5,799.7 917.6,799.3 921.6,799.1 925.7,799.0 929.7,798.9 933.8,798.8 937.9,798.8 941.9,798.8 946.0,798.8 950.0,798.7 954.1,798.5 958.1,798.5 962.2,798.6 966.2,798.5 970.3,798.4 974.3,798.0 978.4,797.7 982.5,797.6 986.5,797.6 990.6,797.8 994.6,798.0 998.7,798.1 1002.7,798.4 1006.8,799.0 1010.8,799.7 1014.9,800.7 1018.9,802.1 1023.0,803.7 1027.1,805.4 1031.1,807.2 1035.2,808.8 1039.2,810.2 1043.3,811.3 1047.3,812.0 1051.4,812.4 1055.4,812.8 1059.5,813.0 1063.6,813.1 1067.6,813.1 1071.7,813.3 1075.7,813.5 1079.8,813.7 1083.8,814.0 1087.9,814.3 1091.9,814.6 1096.0,814.9 1100.0,815.0 1104.1,815.1 1108.2,815.1 1112.2,814.8 1116.3,814.5 1120.3,814.3 1124.4,814.0 1128.4,814.0 1132.5,814.4 1136.5,814.8 1140.6,815.2 1144.7,815.9 1148.7,816.6 1152.8,817.2 1156.8,818.0 1160.9,818.6 1164.9,819.1" fill="none" stroke="#f01a14" stroke-width="2.4" stroke-linejoin="round"/>
</g>
<rect x="4.0" y="779.0" width="206.0" height="17.0" fill="#1e1e1e" fill-opacity="0.72"/>
<line x1="440.5" y1="566" x2="440.5" y2="638" stroke="#f8c800" stroke-width="1"/>
<line x1="440.5" y1="641" x2="440.5" y2="713" stroke="#f8c800" stroke-width="1"/>
<line x1="440.5" y1="716" x2="440.5" y2="772" stroke="#f8c800" stroke-width="1"/>
<line x1="440.5" y1="775" x2="440.5" y2="825" stroke="#f8c800" stroke-width="1"/>
<rect x="13" y="577" width="8" height="3.5" fill="#ffd000"/>
<text x="27" y="582.5" font-size="11.5" fill="#ffd000" textLength="125.8" lengthAdjust="spacingAndGlyphs" stroke="#ffd000" stroke-width="0.25">FSTOC(5, 3)&#160; 72,78&#160; <tspan fill="#2aa2d4" stroke="#2aa2d4">51,28</tspan></text>
<rect x="13" y="652" width="8" height="3.5" fill="#76689c"/>
<text x="27" y="658.3" font-size="11.5" fill="#76689c" textLength="139" lengthAdjust="spacingAndGlyphs" stroke="#76689c" stroke-width="0.25">SSTOC(5, 3, 3)&#160; 51,28&#160; <tspan fill="#a24a9a" stroke="#a24a9a">41,79</tspan></text>
<rect x="13" y="727" width="8" height="3.5" fill="#5a7a44"/>
<text x="27" y="732.5" font-size="11.5" fill="#5a7a44" textLength="62.6" lengthAdjust="spacingAndGlyphs" stroke="#5a7a44" stroke-width="0.25">RSI(8)&#160; 67,08</text>
<rect x="13" y="786" width="8" height="3.5" fill="#3ee8c4"/>
<text x="27" y="791.3" font-size="11.5" fill="#3ee8c4" textLength="179" lengthAdjust="spacingAndGlyphs" stroke="#3ee8c4" stroke-width="0.4">MACD(12, 26, 9)&#160; 2,389&#160; <tspan fill="#f01a14" stroke="#f01a14">1,960</tspan>&#160; <tspan fill="#8a7a30" stroke="#8a7a30">0,428</tspan></text>
<defs><clipPath id="ax0"><rect x="1386" y="566" width="60" height="72"/></clipPath></defs>
<g clip-path="url(#ax0)">
<text x="1397" y="572.2" font-size="12" fill="#6a6a6a">100,00</text>
<text x="1397" y="637.0" font-size="12" fill="#6a6a6a">0,00</text>
</g>
<defs><clipPath id="ax1"><rect x="1386" y="641" width="60" height="72"/></clipPath></defs>
<g clip-path="url(#ax1)">
<text x="1397" y="647.2" font-size="12" fill="#6a6a6a">100,00</text>
<text x="1397" y="712.0" font-size="12" fill="#6a6a6a">0,00</text>
</g>
<defs><clipPath id="ax2"><rect x="1386" y="716" width="60" height="56"/></clipPath></defs>
<g clip-path="url(#ax2)">
<text x="1397" y="720.7" font-size="12" fill="#6a6a6a">100,00</text>
<text x="1397" y="772.5" font-size="12" fill="#6a6a6a">0,00</text>
</g>
<text x="1397" y="810.1" font-size="12" fill="#6a6a6a">0,000</text>
<rect x="3" y="816" width="32" height="10" fill="#000"/>
<rect x="6" y="819" width="5" height="5" fill="#0a9aff"/>
<rect x="13" y="819" width="5" height="5" fill="#1a4a12"/>
<rect x="20" y="819" width="5" height="5" fill="#5a2a10"/>
<rect x="27" y="819" width="5" height="5" fill="#5a4a12"/>
<path d="M1430.5 828 L1449 809.5 V828 Z" fill="#3c3c3c"/><path d="M1440 825 L1445 820 V825 Z" fill="#fff"/>
<rect x="9.0" y="31" width="24.0" height="22" fill="#525252"/>
<rect x="34.0" y="31" width="24.0" height="22" fill="#525252"/>
<rect x="59.0" y="31" width="24.0" height="22" fill="#525252"/>
<rect x="89.0" y="31" width="24.0" height="22" fill="#525252"/>
<rect x="114.0" y="31" width="24.0" height="22" fill="#525252"/>
<rect x="139.0" y="31" width="24.0" height="22" fill="#525252"/>
<rect x="164.0" y="31" width="24.0" height="22" fill="#525252"/>
<rect x="189.0" y="31" width="24.0" height="22" fill="#525252"/>
<rect x="214.0" y="31" width="24.0" height="22" fill="#525252"/>
<rect x="239.0" y="31" width="24.0" height="22" fill="#525252"/>
<rect x="264.0" y="31" width="24.0" height="22" fill="#525252"/>
<rect x="289.0" y="31" width="14.0" height="22" fill="#525252"/>
<rect x="308.5" y="31" width="55.0" height="22" fill="#525252"/>
<text x="336.0" y="45.5" font-size="12" fill="#e6e6e6" text-anchor="middle" textLength="40.9" lengthAdjust="spacingAndGlyphs" stroke="#e6e6e6" stroke-width="0.25">Volumen</text>
<rect x="365.0" y="31" width="36.5" height="22" fill="#525252"/>
<text x="383.2" y="45.5" font-size="12" fill="#e6e6e6" text-anchor="middle" textLength="22.7" lengthAdjust="spacingAndGlyphs" stroke="#e6e6e6" stroke-width="0.25">SMA</text>
<rect x="403.0" y="31" width="36.0" height="22" fill="#525252"/>
<text x="421.0" y="45.5" font-size="12" fill="#e6e6e6" text-anchor="middle" textLength="21.9" lengthAdjust="spacingAndGlyphs" stroke="#e6e6e6" stroke-width="0.25">EMA</text>
<rect x="440.5" y="31" width="38.5" height="22" fill="#525252"/>
<text x="459.8" y="45.5" font-size="12" fill="#e6e6e6" text-anchor="middle" textLength="26.1" lengthAdjust="spacingAndGlyphs" stroke="#e6e6e6" stroke-width="0.25">WMA</text>
<rect x="481.0" y="31" width="14.0" height="22" fill="#525252"/>
<rect x="501.0" y="31" width="63.0" height="22" fill="#525252"/>
<rect x="565.0" y="31" width="70.0" height="22" fill="#525252"/>
<rect x="636.0" y="31" width="45.0" height="22" fill="#525252"/>
<rect x="682.0" y="31" width="58.0" height="22" fill="#525252"/>
<rect x="741.0" y="31" width="45.0" height="22" fill="#525252"/>
<rect x="792.0" y="31" width="23.5" height="22" fill="#525252"/>
<rect x="817.0" y="31" width="24.0" height="22" fill="#525252"/>
<rect x="1391.0" y="31" width="24.0" height="22" fill="#525252"/>
<rect x="1416.0" y="31" width="24.0" height="22" fill="#525252"/>
<path d="M292.0 40.5h8l-4 4.5z" fill="#e6e6e6"/>
<path d="M484.0 40.5h8l-4 4.5z" fill="#e6e6e6"/>
<path d="M508.0 40.5h8l-4 4.5z" fill="#e6e6e6"/>
<path d="M572.0 40.5h8l-4 4.5z" fill="#e6e6e6"/>
<path d="M643.0 40.5h8l-4 4.5z" fill="#e6e6e6"/>
<path d="M689.0 40.5h8l-4 4.5z" fill="#e6e6e6"/>
<path d="M748.0 40.5h8l-4 4.5z" fill="#e6e6e6"/>
<text x="521" y="45.5" font-size="12" fill="#e6e6e6" textLength="36.4" lengthAdjust="spacingAndGlyphs" stroke="#e6e6e6" stroke-width="0.25">5 Jahre</text>
<text x="585.8" y="45.5" font-size="12" fill="#e6e6e6" textLength="42" lengthAdjust="spacingAndGlyphs" stroke="#e6e6e6" stroke-width="0.25">1 Woche</text>
<text x="701.5" y="45.5" font-size="12" fill="#e6e6e6" textLength="31.2" lengthAdjust="spacingAndGlyphs" stroke="#e6e6e6" stroke-width="0.25">Extras</text>
<g fill="none" stroke="#e0e0e0" stroke-width="1.5">
<circle cx="43.8" cy="41" r="4.2"/>
<path d="M47 44.3l3.5 3.3" stroke-width="2"/>
<path d="M120.5 46.5l10-10" stroke-width="1.1"/>
<path d="M145 36.4h10.5M144.5 46.5h12.5" stroke-width="1.2"/><path d="M146.5 38v7M150.5 38v7M154.5 38v7" stroke-width="1"/>
<path d="M168 41.5h15" stroke-width="1" stroke-dasharray="1,1.2"/><path d="M171 41.5h9" stroke-width="1"/>
<path d="M194 40.5h12" stroke-width="1.2"/>
<path d="M221 37l10 10M220 39l9 9M223 36l9 9" stroke-width="0.9"/>
<path d="M245.5 43l4-4.5h1.5l4 4.5" stroke-width="1.3"/>
<path d="M272.8 36v10M272.8 36l6 5l-6 5" stroke-width="1"/>
<circle cx="802" cy="39.8" r="4.3" stroke-width="1.6"/><path d="M805.3 43.3l3.3 3.3" stroke-width="2.4"/>
<path d="M823.6 39.2v4.6h4.6" stroke-width="1.6"/><path d="M824 43.4L827.6 39H830.2Q833.6 39.4 833.4 42.2L831.6 45.6" stroke-width="1.5"/>
<rect x="663" y="37.5" width="2.5" height="9" stroke-width="1"/><rect x="668.5" y="39.5" width="2.5" height="6" stroke-width="1"/><path d="M664.2 34.3v3.2M664.2 46.5v2.3M669.7 37.2v2.3M669.7 45.5v2" stroke-width="1"/>
</g>
<g fill="#e0e0e0">
<rect x="23.0" y="39.9" width="2.2" height="2.2"/>
<rect x="21.7" y="42.9" width="2.2" height="2.2"/>
<rect x="18.7" y="44.2" width="2.2" height="2.2"/>
<rect x="15.7" y="42.9" width="2.2" height="2.2"/>
<rect x="14.4" y="39.9" width="2.2" height="2.2"/>
<rect x="15.7" y="36.9" width="2.2" height="2.2"/>
<rect x="18.7" y="35.6" width="2.2" height="2.2"/>
<rect x="21.7" y="36.9" width="2.2" height="2.2"/>
<path d="M19.8 37.3a3.7 3.7 0 1 0 0.01 0zM19.8 40a1 1 0 1 1 -0.01 0z" fill-rule="evenodd"/>
<rect x="65" y="36" width="5" height="4.7"/><rect x="71" y="36" width="5" height="4.7"/><rect x="65" y="42" width="5" height="4.7"/><rect x="71" y="42" width="5" height="4.7"/>
<path d="M96.5 35.5h8.5v1.8h-3.3v10h-1.9v-10h-3.3z"/><path d="M106 41.3h5v1.1h-5z M107.95 39.3h1.1v5h-1.1z"/>
<rect x="118.9" y="45.1" width="3.3" height="3.2"/><rect x="129" y="35" width="3.2" height="3.2"/>
<rect x="143.9" y="35" width="3.1" height="2.9"/><rect x="154" y="35" width="3.1" height="2.9"/><rect x="148.8" y="45" width="3.3" height="3"/>
<rect x="145.3" y="40.3" width="2.4" height="2.9"/><rect x="149.3" y="39.5" width="2.4" height="2.9"/><rect x="153.4" y="40.3" width="2.4" height="2.9"/>
<rect x="174.2" y="40.2" width="2.8" height="2.8"/><circle cx="168.5" cy="41.5" r="0.8"/><circle cx="183" cy="41.5" r="0.8"/>
<rect x="193" y="39" width="3.1" height="3"/><rect x="198.9" y="39" width="3.1" height="3"/><rect x="204.9" y="39" width="3.1" height="3"/>
<path d="M220 35.5l2.5 2.5l-1 1l-2.5-2.5z"/>
<rect x="242.7" y="42" width="3" height="3"/><rect x="254" y="42" width="3" height="3"/>
<path d="M273 37.5l5.5 3.8l-5.5 3.7z"/><circle cx="272.8" cy="35.7" r="1.3"/><circle cx="278.8" cy="41.3" r="1.3"/><circle cx="272.8" cy="46.3" r="1.3"/>
<path d="M766 46.5h12.4l-1.8-2.5v-3.5a4.4 4.4 0 0 0 -8.8 0v3.5z"/><rect x="771.2" y="47" width="1.6" height="1.8"/><circle cx="772" cy="36" r="1"/>
<circle cx="802" cy="39.8" r="1.9"/>
</g>
<path d="M1397.2 36.5h3.6l2.5 2.5v4.5l-2.5 2.5h-3.6l-2.5-2.5v-4.5z" fill="#e0e0e0"/><path d="M1397.8 38.2h2.4l1.5 1.5v1.4h-5.4v-1.4z" fill="#525252"/>
<g fill="none" stroke="#e0e0e0" stroke-width="1.2"><circle cx="1408.5" cy="37" r="1.5"/><circle cx="1408.5" cy="44.5" r="1.5"/></g>
<path d="M1420 42.5L1423 40L1426.5 37L1429 45L1431.5 40.5L1434 43" fill="none" stroke="#e0e0e0" stroke-width="1"/>
<g fill="#fff"><rect x="9.5" y="7.5" width="13" height="2.6" rx="1.3"/><rect x="9.5" y="12.2" width="13" height="2.6" rx="1.3"/><rect x="9.5" y="16.5" width="13" height="2.6" rx="1.3"/></g>
<text x="28" y="17" font-size="12" fill="#f4f4f4" textLength="110" lengthAdjust="spacingAndGlyphs" stroke="#f4f4f4" stroke-width="0.3">Chart Merck KGaA [5y]</text>
<g fill="none" stroke="#fff" stroke-width="2"><path d="M1369 9l10 10M1379 9l-10 10"/></g><g fill="#fff"><path d="M1368 8h5l-5 5z M1380 8v5l-5-5z M1368 20v-5l5 5z M1380 20h-5l5-5z"/></g>
<path d="M1391 9h-3v10h3" fill="none" stroke="#fff" stroke-width="1.6"/><path d="M1390 12h5v-3.5l6 5.5l-6 5.5v-3.5h-5z" fill="#fff"/>
<circle cx="1414" cy="14" r="5.5" fill="none" stroke="#fff" stroke-width="2"/><circle cx="1414" cy="14" r="2" fill="#fff"/>
<path d="M1429.5 9.5l9 9M1438.5 9.5l-9 9" stroke="#fff" stroke-width="2.8"/>
</svg>
</body></html>
